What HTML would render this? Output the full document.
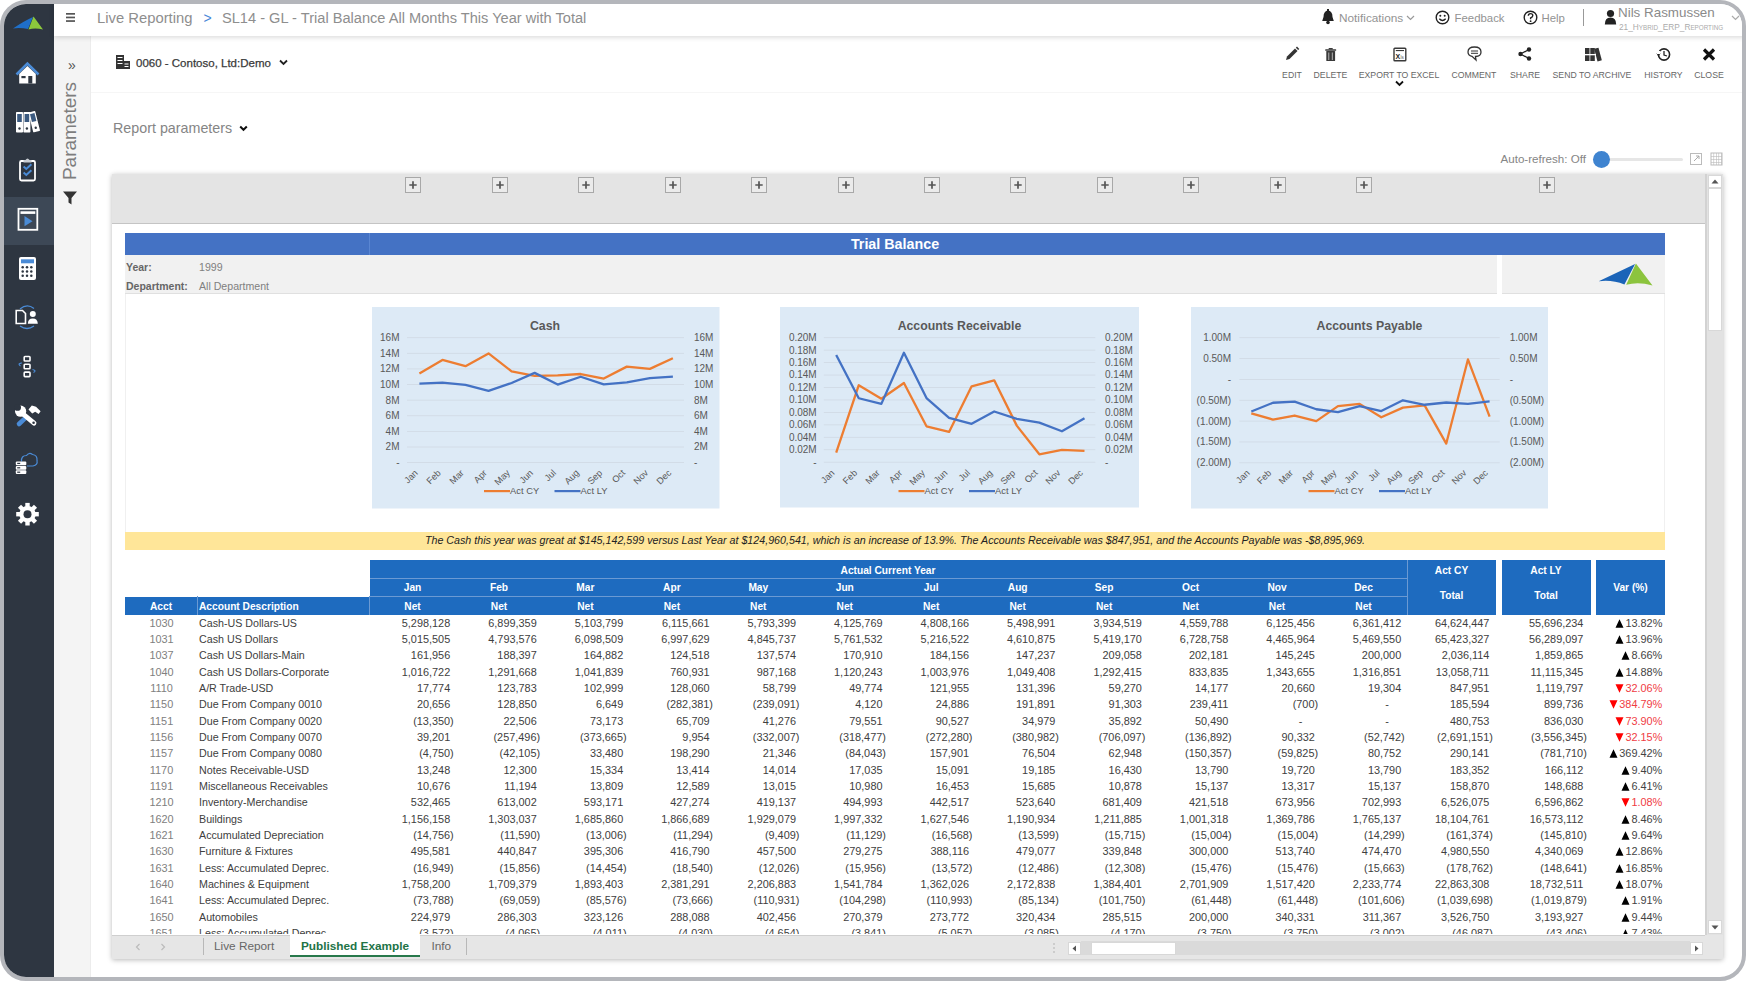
<!DOCTYPE html>
<html><head><meta charset="utf-8"><title>Live Reporting</title>
<style>
html,body{margin:0;padding:0;}
body{width:1746px;height:981px;overflow:hidden;background:#fff;position:relative;font-family:"Liberation Sans", sans-serif;}
#frame{position:absolute;left:0;top:0;width:1746px;height:981px;box-sizing:border-box;border:4px solid #b4b6bb;border-radius:26px;overflow:hidden;background:#fff;}
#inner{position:absolute;left:-4px;top:-4px;width:1746px;height:981px;}
.t{position:absolute;white-space:nowrap;}
</style></head><body>
<div id="frame"><div id="inner">
<div style="position:absolute;left:0;top:0;width:54.5px;height:981px;background:#2e3641;"></div><div style="position:absolute;left:0;top:196.5px;width:54.5px;height:48.5px;background:#3d4856;"></div><svg style="position:absolute;left:0;top:0" width="54" height="540" viewBox="0 0 54 540">
<!-- logo -->
<path d="M13 28.5 Q24 21 33 17 L28 29 Q20 27.5 13 28.5Z" fill="#1f6fc8"/>
<path d="M33.5 16.5 L43 29.5 Q35 27.5 28.5 29.5Z" fill="#8cc83c"/>
<!-- home -->
<path d="M16.5 74.5 L27.4 63.5 L38.5 74.5" fill="none" stroke="#4a8bd6" stroke-width="2.6" stroke-linejoin="miter"/>
<path d="M19.2 74 L27.4 66 L35.8 74 L35.8 83.4 L19.2 83.4Z" fill="#ffffff"/>
<rect x="28.3" y="76" width="4" height="7.5" fill="#2e3641"/>
<rect x="21.4" y="76" width="4.2" height="2.2" fill="#2e3641"/>
<!-- binders -->
<rect x="16" y="112" width="7" height="20.5" rx="0.8" fill="#ffffff"/>
<rect x="23.4" y="112" width="7" height="20.5" rx="0.8" fill="#ffffff"/>
<g transform="rotate(-14 34 122)"><rect x="30.8" y="111.5" width="7" height="20.5" rx="0.8" fill="#ffffff"/>
<rect x="32" y="113.5" width="4.6" height="8" fill="#3b5a80"/><circle cx="34.3" cy="128" r="1.2" fill="#2e3641"/></g>
<rect x="17.2" y="114" width="4.6" height="8" fill="#3b5a80"/><rect x="24.6" y="114" width="4.6" height="8" fill="#3b5a80"/>
<circle cx="19.5" cy="128.5" r="1.2" fill="#2e3641"/><circle cx="26.9" cy="128.5" r="1.2" fill="#2e3641"/>
<!-- clipboard -->
<rect x="20" y="161" width="15" height="19.5" rx="1.5" fill="none" stroke="#ffffff" stroke-width="1.8"/>
<path d="M23.5 162.5 L23.5 160 L25.5 160 Q27.5 157 29.5 160 L31.5 160 L31.5 162.5Z" fill="#c9ced4"/>
<path d="M23.6 166.5 L26.3 169 L31.4 164.2" fill="none" stroke="#4a8bd6" stroke-width="2"/>
<path d="M23.6 172.5 L26.3 175 L31.4 170.2" fill="none" stroke="#4a8bd6" stroke-width="2"/>
<!-- report (active) -->
<rect x="18.5" y="208.8" width="18.8" height="21" fill="none" stroke="#ffffff" stroke-width="1.8"/>
<rect x="20.5" y="211.3" width="14.8" height="2.6" fill="#ffffff"/>
<path d="M24.5 216 L32.5 221.2 L24.5 226.3Z" fill="#4a8bd6"/>
<!-- calculator -->
<rect x="19" y="257" width="17" height="23" rx="2" fill="#ffffff"/>
<rect x="21" y="259.3" width="13" height="4" fill="#4a8bd6"/>
<circle cx="22.7" cy="267.3" r="1.25" fill="#2e3641"/><circle cx="22.7" cy="271.5" r="1.25" fill="#2e3641"/><circle cx="22.7" cy="275.7" r="1.25" fill="#2e3641"/><circle cx="27.0" cy="267.3" r="1.25" fill="#2e3641"/><circle cx="27.0" cy="271.5" r="1.25" fill="#2e3641"/><circle cx="27.0" cy="275.7" r="1.25" fill="#2e3641"/><circle cx="31.3" cy="267.3" r="1.25" fill="#2e3641"/><circle cx="31.3" cy="271.5" r="1.25" fill="#2e3641"/><circle cx="31.3" cy="275.7" r="1.25" fill="#2e3641"/>
<!-- doc/person -->
<path d="M16.2 310.5 L22.5 310.5 L25.5 313.5 L25.5 323.5 L16.2 323.5Z" fill="none" stroke="#ffffff" stroke-width="1.6"/>
<circle cx="32.8" cy="314" r="3" fill="#ffffff"/><path d="M27.8 323.8 Q28 318.5 32.8 318.5 Q37.6 318.5 37.8 323.8Z" fill="#ffffff"/>
<path d="M20 309 Q27 303 34 308.5" fill="none" stroke="#4a8bd6" stroke-width="1.3"/>
<path d="M20 326 Q27 331 34 326" fill="none" stroke="#4a8bd6" stroke-width="1.3"/>
<!-- hierarchy -->
<rect x="24.2" y="356.5" width="5.8" height="4.5" rx="0.8" fill="none" stroke="#ffffff" stroke-width="1.6"/>
<rect x="24.2" y="364.3" width="5.8" height="4.5" rx="0.8" fill="none" stroke="#ffffff" stroke-width="1.6"/>
<rect x="24.2" y="372.1" width="5.8" height="4.5" rx="0.8" fill="none" stroke="#ffffff" stroke-width="1.6"/>
<path d="M21.8 362.8 Q17 363.8 20.5 366" fill="none" stroke="#4a8bd6" stroke-width="1.2"/>
<path d="M32.5 369.5 Q37 370.5 33.5 372.5" fill="none" stroke="#4a8bd6" stroke-width="1.2"/>
<!-- tools -->
<path d="M19 424 L25.5 417.8" stroke="#4a8bd6" stroke-width="4.6" stroke-linecap="round"/>
<path d="M28.5 409.5 L31.8 405.6 L36 406.8 L40.6 411.2 L38.6 414 L35.2 411.8 L32.2 413.5Z" fill="#ffffff"/>
<path d="M22.5 413.5 L34 423.2" stroke="#ffffff" stroke-width="4.8" stroke-linecap="round"/>
<circle cx="20.6" cy="411.2" r="5.6" fill="#ffffff"/>
<circle cx="17.6" cy="407.4" r="3.4" fill="#2e3641"/>
<circle cx="33.6" cy="422.8" r="1.3" fill="#2e3641"/>
<!-- server cloud -->
<path d="M21.5 461.5 Q21 455.5 26.5 455.5 Q29 452 32.5 454.5 Q37.5 455 37 460.5 Q38 465 33 466 L27 466" fill="none" stroke="#4a8bd6" stroke-width="1.2"/>
<rect x="15.8" y="461.5" width="10.5" height="3.8" rx="1" fill="#ffffff"/>
<rect x="15.8" y="465.9" width="10.5" height="3.8" rx="1" fill="#ffffff"/>
<rect x="15.8" y="470.3" width="10.5" height="3.8" rx="1" fill="#ffffff"/>
<rect x="17.2" y="462.8" width="3" height="1.2" fill="#2e3641"/><rect x="17.2" y="467.2" width="3" height="1.2" fill="#2e3641"/><rect x="17.2" y="471.6" width="3" height="1.2" fill="#2e3641"/>
<!-- gear -->
<g transform="translate(27.5 514.2)">
<rect x="-2.2" y="-11.3" width="4.4" height="5" fill="#ffffff" transform="rotate(0)"/><rect x="-2.2" y="-11.3" width="4.4" height="5" fill="#ffffff" transform="rotate(45)"/><rect x="-2.2" y="-11.3" width="4.4" height="5" fill="#ffffff" transform="rotate(90)"/><rect x="-2.2" y="-11.3" width="4.4" height="5" fill="#ffffff" transform="rotate(135)"/><rect x="-2.2" y="-11.3" width="4.4" height="5" fill="#ffffff" transform="rotate(180)"/><rect x="-2.2" y="-11.3" width="4.4" height="5" fill="#ffffff" transform="rotate(225)"/><rect x="-2.2" y="-11.3" width="4.4" height="5" fill="#ffffff" transform="rotate(270)"/><rect x="-2.2" y="-11.3" width="4.4" height="5" fill="#ffffff" transform="rotate(315)"/>
<circle r="8.2" fill="#ffffff"/><circle r="4" fill="#2e3641"/>
</g>
</svg><div style="position:absolute;left:54px;top:0;width:1692px;height:36px;background:#fff;box-shadow:0 1.5px 5px rgba(0,0,0,0.15);z-index:2;"></div><div style="position:absolute;left:54px;top:36px;width:36px;height:945px;background:#f4f4f4;"></div><div style="position:absolute;left:90px;top:36px;width:1px;height:945px;background:#ececec;"></div><div style="position:absolute;left:0;top:0;width:1746px;height:36px;z-index:3;"><svg style="position:absolute;left:66px;top:13px" width="10" height="10"><rect x="0" y="0" width="9" height="1.7" fill="#555"/><rect x="0" y="3.6" width="9" height="1.7" fill="#555"/><rect x="0" y="7.2" width="9" height="1.7" fill="#555"/></svg><div class="t" style="left:97px;top:9px;font-size:14.8px;line-height:18px;color:#8e8e8e;">Live Reporting</div><div class="t" style="left:203.5px;top:9px;font-size:14px;line-height:18px;color:#4a88d8;">&gt;</div><div class="t" style="left:222px;top:9px;font-size:14.62px;line-height:18px;color:#8e8e8e;">SL14 - GL - Trial Balance All Months This Year with Total</div><svg style="position:absolute;left:1321px;top:9px" width="14" height="16" viewBox="0 0 14 16"><path d="M7 1.5 Q11.5 2 11.5 8 L12.8 12 L1.2 12 L2.5 8 Q2.5 2 7 1.5Z" fill="#222"/><rect x="6" y="0" width="2" height="2" fill="#222"/><circle cx="7" cy="13.5" r="1.8" fill="#222"/></svg><div class="t" style="left:1339px;top:10.5px;font-size:11.8px;line-height:15px;color:#939393;">Notifications</div><svg style="position:absolute;left:1406px;top:15px" width="9" height="6"><path d="M1 1 L4.5 4.5 L8 1" fill="none" stroke="#999" stroke-width="1.2"/></svg><svg style="position:absolute;left:1435px;top:10px" width="15" height="15" viewBox="0 0 15 15"><circle cx="7.5" cy="7.5" r="6.3" fill="none" stroke="#222" stroke-width="1.4"/><circle cx="5.3" cy="5.8" r="1" fill="#222"/><circle cx="9.7" cy="5.8" r="1" fill="#222"/><path d="M4.3 8.8 Q7.5 12.2 10.7 8.8" fill="none" stroke="#222" stroke-width="1.3"/></svg><div class="t" style="left:1454.5px;top:10.5px;font-size:11.4px;line-height:15px;color:#939393;">Feedback</div><svg style="position:absolute;left:1523px;top:10px" width="15" height="15" viewBox="0 0 15 15"><circle cx="7.5" cy="7.5" r="6.3" fill="none" stroke="#222" stroke-width="1.4"/><path d="M5.3 5.8 Q5.3 3.6 7.5 3.6 Q9.8 3.6 9.8 5.6 Q9.8 7 7.6 8 L7.6 9.3" fill="none" stroke="#222" stroke-width="1.4"/><circle cx="7.6" cy="11.2" r="0.9" fill="#222"/></svg><div class="t" style="left:1541.5px;top:10.5px;font-size:11.4px;line-height:15px;color:#939393;">Help</div><div style="position:absolute;left:1583px;top:9px;width:1px;height:17px;background:#999;"></div><svg style="position:absolute;left:1604px;top:9px" width="13" height="16" viewBox="0 0 13 16"><circle cx="6.5" cy="4.5" r="3.6" fill="#222"/><path d="M0.8 15.5 Q0.8 8.5 6.5 8.5 Q12.2 8.5 12.2 15.5Z" fill="#222"/></svg><div class="t" style="left:1618px;top:5px;font-size:13.4px;line-height:16px;color:#8a8a8a;">Nils Rasmussen</div><div class="t" style="left:1619px;top:21.5px;font-size:8.3px;line-height:11px;color:#ababab;">21_H<span style="font-size:6.3px">YBRID</span>_ERP_R<span style="font-size:6.3px">EPORTING</span></div><svg style="position:absolute;left:1731px;top:15px" width="9" height="6"><path d="M1 1 L4.5 4.5 L8 1" fill="none" stroke="#aaa" stroke-width="1.2"/></svg></div><div class="t" style="left:68px;top:57px;font-size:14px;line-height:16px;color:#555;">&raquo;</div><div class="t" style="left:20px;top:122.5px;width:100px;height:16px;text-align:center;font-size:19px;line-height:16px;color:#7d7d7d;transform:rotate(-90deg);">Parameters</div><svg style="position:absolute;left:63px;top:191px" width="14" height="14" viewBox="0 0 14 14"><path d="M0 0.5 L14 0.5 L8.5 7 L8.5 13.5 L5.5 11.5 L5.5 7Z" fill="#333"/></svg><svg style="position:absolute;left:116px;top:55px" width="14" height="14" viewBox="0 0 14 14"><rect x="0" y="0" width="8" height="14" fill="#333"/><rect x="7" y="6" width="7" height="8" fill="#333"/><rect x="1.5" y="2" width="5" height="1" fill="#fff"/><rect x="1.5" y="5" width="5" height="1" fill="#fff"/><rect x="1.5" y="8" width="5" height="1" fill="#fff"/><rect x="8.5" y="8.5" width="4" height="1" fill="#fff"/><rect x="8.5" y="11" width="4" height="1" fill="#fff"/></svg><div class="t" style="left:136px;top:55.5px;font-size:11.5px;line-height:14px;color:#3a3a3a;-webkit-text-stroke:0.25px #3a3a3a;">0060 - Contoso, Ltd:Demo</div><svg style="position:absolute;left:279px;top:59px" width="9" height="7"><path d="M1 1.5 L4.5 5 L8 1.5" fill="none" stroke="#222" stroke-width="1.8"/></svg><div style="position:absolute;left:91px;top:92px;width:1651px;height:1px;background:#f6f6f6;"></div><div class="t" style="left:1232px;width:120px;text-align:center;top:69px;font-size:8.7px;line-height:12px;color:#666;">EDIT</div><div class="t" style="left:1270.5px;width:120px;text-align:center;top:69px;font-size:8.7px;line-height:12px;color:#666;">DELETE</div><div class="t" style="left:1339px;width:120px;text-align:center;top:69px;font-size:8.7px;line-height:12px;color:#666;">EXPORT TO EXCEL</div><div class="t" style="left:1414px;width:120px;text-align:center;top:69px;font-size:8.7px;line-height:12px;color:#666;">COMMENT</div><div class="t" style="left:1465px;width:120px;text-align:center;top:69px;font-size:8.7px;line-height:12px;color:#666;">SHARE</div><div class="t" style="left:1532px;width:120px;text-align:center;top:69px;font-size:8.7px;line-height:12px;color:#666;">SEND TO ARCHIVE</div><div class="t" style="left:1603.5px;width:120px;text-align:center;top:69px;font-size:8.7px;line-height:12px;color:#666;">HISTORY</div><div class="t" style="left:1649px;width:120px;text-align:center;top:69px;font-size:8.7px;line-height:12px;color:#666;">CLOSE</div><svg style="position:absolute;left:1395px;top:80px" width="9" height="7"><path d="M1 1.5 L4.5 5 L8 1.5" fill="none" stroke="#111" stroke-width="1.8"/></svg><svg style="position:absolute;left:1270px;top:40.5px" width="470" height="26" viewBox="1270 40 470 26">
<path d="M1286 59 L1287 55.5 L1295 47.5 L1297.5 50 L1289.5 58Z" fill="#333"/><path d="M1295.8 46.8 L1297 45.6 L1299.3 47.9 L1298.1 49.1Z" fill="#333"/>
<rect x="1326.3" y="50" width="8.8" height="10" rx="0.6" fill="#3a3a3a"/><rect x="1325.2" y="48.2" width="11" height="1.6" rx="0.5" fill="#3a3a3a"/><rect x="1328.7" y="47" width="4" height="1.4" fill="#3a3a3a"/>
<rect x="1328.2" y="51.5" width="1.1" height="7.5" fill="#aaa"/><rect x="1331.8" y="51.5" width="1.1" height="7.5" fill="#aaa"/>
<rect x="1394" y="47.2" width="11.8" height="12.6" rx="0.8" fill="none" stroke="#3a3a3a" stroke-width="1.4"/><rect x="1395.8" y="49" width="8.2" height="1.1" fill="#3a3a3a"/>
<text x="1395.6" y="57.6" font-size="7" font-family="Liberation Sans" font-weight="bold" fill="#222">X</text><text x="1400.6" y="57.8" font-size="4.5" font-family="Liberation Sans" fill="#555">ls</text>
<path d="M1474.5 46 Q1481 46 1481 51 Q1481 55.5 1475.5 55.5 L1476 59 L1472 55.3 Q1468 54.5 1468 51 Q1468 46 1474.5 46Z" fill="none" stroke="#333" stroke-width="1.3"/>
<rect x="1471" y="49.5" width="7" height="1" fill="#333"/><rect x="1471" y="51.8" width="7" height="1" fill="#333"/>
<circle cx="1520.5" cy="53" r="2.2" fill="#222"/><circle cx="1529" cy="48.5" r="2.2" fill="#222"/><circle cx="1529" cy="57.5" r="2.2" fill="#222"/>
<path d="M1520.5 53 L1529 48.5 M1520.5 53 L1529 57.5" stroke="#222" stroke-width="1.3"/>
<rect x="1585" y="47" width="4.5" height="13" fill="#333"/><rect x="1590.3" y="47" width="4.5" height="13" fill="#333"/><g transform="rotate(-15 1598 53)"><rect x="1595.6" y="47" width="4.5" height="13" fill="#333"/></g>
<rect x="1584" y="53" width="12" height="1.3" fill="#fff"/>
<circle cx="1664" cy="53.5" r="5.6" fill="none" stroke="#222" stroke-width="1.6"/><path d="M1664 50 L1664 54 L1667 55" fill="none" stroke="#222" stroke-width="1.3"/>
<path d="M1656.5 52 L1660.5 52 L1658.5 56Z" fill="#222"/><rect x="1657" y="50" width="3" height="3" fill="#fff"/>
<path d="M1704 48.5 L1714 58.5 M1714 48.5 L1704 58.5" stroke="#111" stroke-width="3.2"/>
</svg><div class="t" style="left:113px;top:120px;font-size:14.3px;line-height:17px;color:#858585;">Report parameters</div><svg style="position:absolute;left:239px;top:125px" width="9" height="7"><path d="M1.2 1.5 L4.5 4.8 L7.8 1.5" fill="none" stroke="#111" stroke-width="2"/></svg><div class="t" style="left:1500.5px;top:151.5px;font-size:11.6px;line-height:14px;color:#858585;">Auto-refresh: Off</div><div style="position:absolute;left:1604px;top:157.5px;width:79px;height:3px;background:#e6e6e6;border-radius:1.5px;"></div><div style="position:absolute;left:1592.5px;top:150.5px;width:17px;height:17px;border-radius:50%;background:#3f84d0;"></div><svg style="position:absolute;left:1690px;top:152px" width="40" height="14" viewBox="0 0 40 14"><rect x="0.5" y="1.5" width="11" height="11" fill="none" stroke="#bbb" stroke-width="1"/><path d="M4 9 L9 4 M6 4 L9 4 L9 7" stroke="#aaa" stroke-width="1" fill="none"/><rect x="21" y="1" width="11" height="12" fill="none" stroke="#bbb" stroke-width="1"/><rect x="23.5" y="1" width="0.6" height="12" fill="#bbb"/><rect x="26.0" y="1" width="0.6" height="12" fill="#bbb"/><rect x="28.5" y="1" width="0.6" height="12" fill="#bbb"/><rect x="31.0" y="1" width="0.6" height="12" fill="#bbb"/><rect x="21" y="4.0" width="11" height="0.6" fill="#bbb"/><rect x="21" y="7.0" width="11" height="0.6" fill="#bbb"/><rect x="21" y="10.0" width="11" height="0.6" fill="#bbb"/></svg><div style="position:absolute;left:112px;top:174px;width:1611px;height:785px;background:#fff;box-shadow:0 1px 5px rgba(0,0,0,0.28);"></div><div style="position:absolute;left:112px;top:174px;width:1593px;height:49px;background:#e4e4e4;border-bottom:1.5px solid #c4c4c4;"></div><div style="position:absolute;left:405.2px;top:177px;width:14px;height:14px;border:1px solid #a8a8a8;background:#ebebeb;"></div><svg style="position:absolute;left:405.2px;top:177px" width="16" height="16"><path d="M8 4.3 L8 11.7 M4.3 8 L11.7 8" stroke="#555" stroke-width="1.7"/></svg><div style="position:absolute;left:491.6px;top:177px;width:14px;height:14px;border:1px solid #a8a8a8;background:#ebebeb;"></div><svg style="position:absolute;left:491.6px;top:177px" width="16" height="16"><path d="M8 4.3 L8 11.7 M4.3 8 L11.7 8" stroke="#555" stroke-width="1.7"/></svg><div style="position:absolute;left:578.1px;top:177px;width:14px;height:14px;border:1px solid #a8a8a8;background:#ebebeb;"></div><svg style="position:absolute;left:578.1px;top:177px" width="16" height="16"><path d="M8 4.3 L8 11.7 M4.3 8 L11.7 8" stroke="#555" stroke-width="1.7"/></svg><div style="position:absolute;left:664.5px;top:177px;width:14px;height:14px;border:1px solid #a8a8a8;background:#ebebeb;"></div><svg style="position:absolute;left:664.5px;top:177px" width="16" height="16"><path d="M8 4.3 L8 11.7 M4.3 8 L11.7 8" stroke="#555" stroke-width="1.7"/></svg><div style="position:absolute;left:751.0px;top:177px;width:14px;height:14px;border:1px solid #a8a8a8;background:#ebebeb;"></div><svg style="position:absolute;left:751.0px;top:177px" width="16" height="16"><path d="M8 4.3 L8 11.7 M4.3 8 L11.7 8" stroke="#555" stroke-width="1.7"/></svg><div style="position:absolute;left:837.5px;top:177px;width:14px;height:14px;border:1px solid #a8a8a8;background:#ebebeb;"></div><svg style="position:absolute;left:837.5px;top:177px" width="16" height="16"><path d="M8 4.3 L8 11.7 M4.3 8 L11.7 8" stroke="#555" stroke-width="1.7"/></svg><div style="position:absolute;left:923.9px;top:177px;width:14px;height:14px;border:1px solid #a8a8a8;background:#ebebeb;"></div><svg style="position:absolute;left:923.9px;top:177px" width="16" height="16"><path d="M8 4.3 L8 11.7 M4.3 8 L11.7 8" stroke="#555" stroke-width="1.7"/></svg><div style="position:absolute;left:1010.3px;top:177px;width:14px;height:14px;border:1px solid #a8a8a8;background:#ebebeb;"></div><svg style="position:absolute;left:1010.3px;top:177px" width="16" height="16"><path d="M8 4.3 L8 11.7 M4.3 8 L11.7 8" stroke="#555" stroke-width="1.7"/></svg><div style="position:absolute;left:1096.8px;top:177px;width:14px;height:14px;border:1px solid #a8a8a8;background:#ebebeb;"></div><svg style="position:absolute;left:1096.8px;top:177px" width="16" height="16"><path d="M8 4.3 L8 11.7 M4.3 8 L11.7 8" stroke="#555" stroke-width="1.7"/></svg><div style="position:absolute;left:1183.2px;top:177px;width:14px;height:14px;border:1px solid #a8a8a8;background:#ebebeb;"></div><svg style="position:absolute;left:1183.2px;top:177px" width="16" height="16"><path d="M8 4.3 L8 11.7 M4.3 8 L11.7 8" stroke="#555" stroke-width="1.7"/></svg><div style="position:absolute;left:1269.7px;top:177px;width:14px;height:14px;border:1px solid #a8a8a8;background:#ebebeb;"></div><svg style="position:absolute;left:1269.7px;top:177px" width="16" height="16"><path d="M8 4.3 L8 11.7 M4.3 8 L11.7 8" stroke="#555" stroke-width="1.7"/></svg><div style="position:absolute;left:1356.2px;top:177px;width:14px;height:14px;border:1px solid #a8a8a8;background:#ebebeb;"></div><svg style="position:absolute;left:1356.2px;top:177px" width="16" height="16"><path d="M8 4.3 L8 11.7 M4.3 8 L11.7 8" stroke="#555" stroke-width="1.7"/></svg><div style="position:absolute;left:1538.5px;top:177px;width:14px;height:14px;border:1px solid #a8a8a8;background:#ebebeb;"></div><svg style="position:absolute;left:1538.5px;top:177px" width="16" height="16"><path d="M8 4.3 L8 11.7 M4.3 8 L11.7 8" stroke="#555" stroke-width="1.7"/></svg><div style="position:absolute;left:1705px;top:174px;width:18px;height:761px;background:#e2e2e2;border-left:2px solid #d2d2d2;box-sizing:border-box;"></div><div style="position:absolute;left:1708px;top:175px;width:14px;height:13px;background:#fff;border:1px solid #d8d8d8;box-sizing:border-box;"></div><svg style="position:absolute;left:1708px;top:175px" width="14" height="13"><path d="M3.5 8.5 L7 4.5 L10.5 8.5Z" fill="#555"/></svg><div style="position:absolute;left:1708px;top:188px;width:14px;height:143px;background:#fff;border:1px solid #d8d8d8;box-sizing:border-box;"></div><div style="position:absolute;left:1708px;top:920px;width:14px;height:14px;background:#fff;border:1px solid #d8d8d8;box-sizing:border-box;"></div><svg style="position:absolute;left:1708px;top:920px" width="14" height="14"><path d="M3.5 5.5 L7 9.5 L10.5 5.5Z" fill="#555"/></svg><div style="position:absolute;left:125px;top:232.5px;width:1540px;height:23px;background:#4472c4;"></div><div style="position:absolute;left:369px;top:232.5px;width:1px;height:23px;background:#5a86d2;"></div><div class="t" style="left:595px;width:600px;text-align:center;top:236px;font-size:14.3px;line-height:17px;color:#fff;font-weight:bold;">Trial Balance</div><div style="position:absolute;left:125px;top:255px;width:1540px;height:39px;background:#f1f1f1;border-bottom:1px solid #e0e0e0;box-sizing:border-box;"></div><div style="position:absolute;left:1497px;top:255px;width:4.5px;height:39px;background:#fff;"></div><div class="t" style="left:126px;top:260px;font-size:10.5px;line-height:14px;color:#666;font-weight:bold;">Year:</div><div class="t" style="left:199px;top:260px;font-size:10.6px;line-height:14px;color:#808080;">1999</div><div class="t" style="left:126px;top:279px;font-size:10.5px;line-height:14px;color:#666;font-weight:bold;">Department:</div><div class="t" style="left:199px;top:279px;font-size:10.6px;line-height:14px;color:#808080;">All Department</div><svg style="position:absolute;left:1596px;top:262px" width="58" height="26" viewBox="0 0 58 26"><path d="M2.7 19.3 L39.1 2.1 L28.4 22.4 Q16 17.6 2.7 19.3Z" fill="#1b64b8"/><path d="M39.9 1.6 L56.5 23.4 Q42 19.2 30.2 22.8Z" fill="#8cc43e"/></svg><div style="position:absolute;left:125px;top:294px;width:1px;height:238px;background:#f0f0f0;"></div><div style="position:absolute;left:1664px;top:294px;width:1px;height:238px;background:#f0f0f0;"></div><svg style="position:absolute;left:0;top:0" width="1746" height="981" viewBox="0 0 1746 981" font-family="Liberation Sans, sans-serif"><rect x="372" y="307" width="347.5" height="201.5" fill="#ddeaf6"/><text x="545" y="329.8" text-anchor="middle" font-size="12.3" font-weight="bold" fill="#595959">Cash</text><rect x="407" y="337.30" width="277" height="0.8" fill="#d0d9e4"/><text x="399.5" y="341.10" text-anchor="end" font-size="10" fill="#595959">16M</text><text x="694" y="341.10" text-anchor="start" font-size="10" fill="#595959">16M</text><rect x="407" y="352.91" width="277" height="0.8" fill="#d0d9e4"/><text x="399.5" y="356.71" text-anchor="end" font-size="10" fill="#595959">14M</text><text x="694" y="356.71" text-anchor="start" font-size="10" fill="#595959">14M</text><rect x="407" y="368.53" width="277" height="0.8" fill="#d0d9e4"/><text x="399.5" y="372.32" text-anchor="end" font-size="10" fill="#595959">12M</text><text x="694" y="372.32" text-anchor="start" font-size="10" fill="#595959">12M</text><rect x="407" y="384.14" width="277" height="0.8" fill="#d0d9e4"/><text x="399.5" y="387.94" text-anchor="end" font-size="10" fill="#595959">10M</text><text x="694" y="387.94" text-anchor="start" font-size="10" fill="#595959">10M</text><rect x="407" y="399.75" width="277" height="0.8" fill="#d0d9e4"/><text x="399.5" y="403.55" text-anchor="end" font-size="10" fill="#595959">8M</text><text x="694" y="403.55" text-anchor="start" font-size="10" fill="#595959">8M</text><rect x="407" y="415.36" width="277" height="0.8" fill="#d0d9e4"/><text x="399.5" y="419.16" text-anchor="end" font-size="10" fill="#595959">6M</text><text x="694" y="419.16" text-anchor="start" font-size="10" fill="#595959">6M</text><rect x="407" y="430.98" width="277" height="0.8" fill="#d0d9e4"/><text x="399.5" y="434.77" text-anchor="end" font-size="10" fill="#595959">4M</text><text x="694" y="434.77" text-anchor="start" font-size="10" fill="#595959">4M</text><rect x="407" y="446.59" width="277" height="0.8" fill="#d0d9e4"/><text x="399.5" y="450.39" text-anchor="end" font-size="10" fill="#595959">2M</text><text x="694" y="450.39" text-anchor="start" font-size="10" fill="#595959">2M</text><rect x="407" y="462.20" width="277" height="0.8" fill="#d0d9e4"/><text x="399.5" y="466.00" text-anchor="end" font-size="10" fill="#595959">-</text><text x="694" y="466.00" text-anchor="start" font-size="10" fill="#595959">-</text><polyline points="419.40,373.58 442.45,359.89 465.49,366.17 488.54,353.39 511.58,371.33 534.63,375.82 557.67,375.37 580.72,374.02 603.76,378.51 626.81,366.62 649.85,368.86 672.90,358.32" fill="none" stroke="#ed7d31" stroke-width="2.3" stroke-linejoin="round"/><polyline points="419.40,383.67 442.45,382.55 465.49,384.79 488.54,390.85 511.58,383.00 534.63,372.90 557.67,384.57 580.72,376.72 603.76,384.34 626.81,382.32 649.85,378.06 672.90,376.72" fill="none" stroke="#4472c4" stroke-width="2.3" stroke-linejoin="round"/><text x="418.40" y="473.5" text-anchor="end" font-size="9.2" fill="#595959" transform="rotate(-45 418.40 473.5)">Jan</text><text x="441.45" y="473.5" text-anchor="end" font-size="9.2" fill="#595959" transform="rotate(-45 441.45 473.5)">Feb</text><text x="464.49" y="473.5" text-anchor="end" font-size="9.2" fill="#595959" transform="rotate(-45 464.49 473.5)">Mar</text><text x="487.54" y="473.5" text-anchor="end" font-size="9.2" fill="#595959" transform="rotate(-45 487.54 473.5)">Apr</text><text x="510.58" y="473.5" text-anchor="end" font-size="9.2" fill="#595959" transform="rotate(-45 510.58 473.5)">May</text><text x="533.63" y="473.5" text-anchor="end" font-size="9.2" fill="#595959" transform="rotate(-45 533.63 473.5)">Jun</text><text x="556.67" y="473.5" text-anchor="end" font-size="9.2" fill="#595959" transform="rotate(-45 556.67 473.5)">Jul</text><text x="579.72" y="473.5" text-anchor="end" font-size="9.2" fill="#595959" transform="rotate(-45 579.72 473.5)">Aug</text><text x="602.76" y="473.5" text-anchor="end" font-size="9.2" fill="#595959" transform="rotate(-45 602.76 473.5)">Sep</text><text x="625.81" y="473.5" text-anchor="end" font-size="9.2" fill="#595959" transform="rotate(-45 625.81 473.5)">Oct</text><text x="648.85" y="473.5" text-anchor="end" font-size="9.2" fill="#595959" transform="rotate(-45 648.85 473.5)">Nov</text><text x="671.90" y="473.5" text-anchor="end" font-size="9.2" fill="#595959" transform="rotate(-45 671.90 473.5)">Dec</text><rect x="484" y="490" width="26" height="2.2" fill="#ed7d31"/><text x="510" y="494.3" font-size="9.4" fill="#595959">Act CY</text><rect x="554.5" y="490" width="26" height="2.2" fill="#4472c4"/><text x="580.5" y="494.3" font-size="9.4" fill="#595959">Act LY</text><rect x="780" y="307" width="359" height="200.5" fill="#ddeaf6"/><text x="959.5" y="329.8" text-anchor="middle" font-size="12.3" font-weight="bold" fill="#595959">Accounts Receivable</text><rect x="823.8" y="337.30" width="271.5" height="0.8" fill="#d0d9e4"/><text x="816.7" y="341.10" text-anchor="end" font-size="10" fill="#595959">0.20M</text><text x="1105" y="341.10" text-anchor="start" font-size="10" fill="#595959">0.20M</text><rect x="823.8" y="349.75" width="271.5" height="0.8" fill="#d0d9e4"/><text x="816.7" y="353.55" text-anchor="end" font-size="10" fill="#595959">0.18M</text><text x="1105" y="353.55" text-anchor="start" font-size="10" fill="#595959">0.18M</text><rect x="823.8" y="362.20" width="271.5" height="0.8" fill="#d0d9e4"/><text x="816.7" y="366.00" text-anchor="end" font-size="10" fill="#595959">0.16M</text><text x="1105" y="366.00" text-anchor="start" font-size="10" fill="#595959">0.16M</text><rect x="823.8" y="374.65" width="271.5" height="0.8" fill="#d0d9e4"/><text x="816.7" y="378.45" text-anchor="end" font-size="10" fill="#595959">0.14M</text><text x="1105" y="378.45" text-anchor="start" font-size="10" fill="#595959">0.14M</text><rect x="823.8" y="387.10" width="271.5" height="0.8" fill="#d0d9e4"/><text x="816.7" y="390.90" text-anchor="end" font-size="10" fill="#595959">0.12M</text><text x="1105" y="390.90" text-anchor="start" font-size="10" fill="#595959">0.12M</text><rect x="823.8" y="399.55" width="271.5" height="0.8" fill="#d0d9e4"/><text x="816.7" y="403.35" text-anchor="end" font-size="10" fill="#595959">0.10M</text><text x="1105" y="403.35" text-anchor="start" font-size="10" fill="#595959">0.10M</text><rect x="823.8" y="412.00" width="271.5" height="0.8" fill="#d0d9e4"/><text x="816.7" y="415.80" text-anchor="end" font-size="10" fill="#595959">0.08M</text><text x="1105" y="415.80" text-anchor="start" font-size="10" fill="#595959">0.08M</text><rect x="823.8" y="424.45" width="271.5" height="0.8" fill="#d0d9e4"/><text x="816.7" y="428.25" text-anchor="end" font-size="10" fill="#595959">0.06M</text><text x="1105" y="428.25" text-anchor="start" font-size="10" fill="#595959">0.06M</text><rect x="823.8" y="436.90" width="271.5" height="0.8" fill="#d0d9e4"/><text x="816.7" y="440.70" text-anchor="end" font-size="10" fill="#595959">0.04M</text><text x="1105" y="440.70" text-anchor="start" font-size="10" fill="#595959">0.04M</text><rect x="823.8" y="449.35" width="271.5" height="0.8" fill="#d0d9e4"/><text x="816.7" y="453.15" text-anchor="end" font-size="10" fill="#595959">0.02M</text><text x="1105" y="453.15" text-anchor="start" font-size="10" fill="#595959">0.02M</text><rect x="823.8" y="461.80" width="271.5" height="0.8" fill="#d0d9e4"/><text x="816.7" y="465.60" text-anchor="end" font-size="10" fill="#595959">-</text><text x="1105" y="465.60" text-anchor="start" font-size="10" fill="#595959">-</text><polyline points="836.20,452.53 858.77,385.24 881.35,398.70 903.92,383.00 926.49,426.29 949.06,431.90 971.64,386.36 994.21,380.31 1016.78,425.62 1039.35,454.33 1061.93,449.84 1084.50,450.96" fill="none" stroke="#ed7d31" stroke-width="2.3" stroke-linejoin="round"/><polyline points="836.20,354.96 858.77,398.25 881.35,403.86 903.92,352.71 926.49,398.03 949.06,417.77 971.64,423.82 994.21,411.48 1016.78,418.89 1039.35,422.70 1061.93,431.22 1084.50,418.21" fill="none" stroke="#4472c4" stroke-width="2.3" stroke-linejoin="round"/><text x="835.20" y="473.5" text-anchor="end" font-size="9.2" fill="#595959" transform="rotate(-45 835.20 473.5)">Jan</text><text x="857.77" y="473.5" text-anchor="end" font-size="9.2" fill="#595959" transform="rotate(-45 857.77 473.5)">Feb</text><text x="880.35" y="473.5" text-anchor="end" font-size="9.2" fill="#595959" transform="rotate(-45 880.35 473.5)">Mar</text><text x="902.92" y="473.5" text-anchor="end" font-size="9.2" fill="#595959" transform="rotate(-45 902.92 473.5)">Apr</text><text x="925.49" y="473.5" text-anchor="end" font-size="9.2" fill="#595959" transform="rotate(-45 925.49 473.5)">May</text><text x="948.06" y="473.5" text-anchor="end" font-size="9.2" fill="#595959" transform="rotate(-45 948.06 473.5)">Jun</text><text x="970.64" y="473.5" text-anchor="end" font-size="9.2" fill="#595959" transform="rotate(-45 970.64 473.5)">Jul</text><text x="993.21" y="473.5" text-anchor="end" font-size="9.2" fill="#595959" transform="rotate(-45 993.21 473.5)">Aug</text><text x="1015.78" y="473.5" text-anchor="end" font-size="9.2" fill="#595959" transform="rotate(-45 1015.78 473.5)">Sep</text><text x="1038.35" y="473.5" text-anchor="end" font-size="9.2" fill="#595959" transform="rotate(-45 1038.35 473.5)">Oct</text><text x="1060.93" y="473.5" text-anchor="end" font-size="9.2" fill="#595959" transform="rotate(-45 1060.93 473.5)">Nov</text><text x="1083.50" y="473.5" text-anchor="end" font-size="9.2" fill="#595959" transform="rotate(-45 1083.50 473.5)">Dec</text><rect x="898.5" y="490" width="26" height="2.2" fill="#ed7d31"/><text x="924.5" y="494.3" font-size="9.4" fill="#595959">Act CY</text><rect x="969.0" y="490" width="26" height="2.2" fill="#4472c4"/><text x="995.0" y="494.3" font-size="9.4" fill="#595959">Act LY</text><rect x="1191" y="307" width="357" height="201.5" fill="#ddeaf6"/><text x="1369.5" y="329.8" text-anchor="middle" font-size="12.3" font-weight="bold" fill="#595959">Accounts Payable</text><rect x="1239.4" y="337.30" width="260.29999999999995" height="0.8" fill="#d0d9e4"/><text x="1231" y="341.10" text-anchor="end" font-size="10" fill="#595959">1.00M</text><text x="1509.7" y="341.10" text-anchor="start" font-size="10" fill="#595959">1.00M</text><rect x="1239.4" y="358.15" width="260.29999999999995" height="0.8" fill="#d0d9e4"/><text x="1231" y="361.95" text-anchor="end" font-size="10" fill="#595959">0.50M</text><text x="1509.7" y="361.95" text-anchor="start" font-size="10" fill="#595959">0.50M</text><rect x="1239.4" y="379.00" width="260.29999999999995" height="0.8" fill="#d0d9e4"/><text x="1231" y="382.80" text-anchor="end" font-size="10" fill="#595959">-</text><text x="1509.7" y="382.80" text-anchor="start" font-size="10" fill="#595959">-</text><rect x="1239.4" y="399.85" width="260.29999999999995" height="0.8" fill="#d0d9e4"/><text x="1231" y="403.65" text-anchor="end" font-size="10" fill="#595959">(0.50M)</text><text x="1509.7" y="403.65" text-anchor="start" font-size="10" fill="#595959">(0.50M)</text><rect x="1239.4" y="420.70" width="260.29999999999995" height="0.8" fill="#d0d9e4"/><text x="1231" y="424.50" text-anchor="end" font-size="10" fill="#595959">(1.00M)</text><text x="1509.7" y="424.50" text-anchor="start" font-size="10" fill="#595959">(1.00M)</text><rect x="1239.4" y="441.55" width="260.29999999999995" height="0.8" fill="#d0d9e4"/><text x="1231" y="445.35" text-anchor="end" font-size="10" fill="#595959">(1.50M)</text><text x="1509.7" y="445.35" text-anchor="start" font-size="10" fill="#595959">(1.50M)</text><rect x="1239.4" y="462.40" width="260.29999999999995" height="0.8" fill="#d0d9e4"/><text x="1231" y="466.20" text-anchor="end" font-size="10" fill="#595959">(2.00M)</text><text x="1509.7" y="466.20" text-anchor="start" font-size="10" fill="#595959">(2.00M)</text><polyline points="1251.30,413.28 1272.96,419.56 1294.63,415.52 1316.29,421.13 1337.95,406.10 1359.62,403.86 1381.28,417.32 1402.95,407.67 1424.61,405.43 1446.27,443.56 1467.94,359.44 1489.60,416.64" fill="none" stroke="#ed7d31" stroke-width="2.3" stroke-linejoin="round"/><polyline points="1251.30,411.48 1272.96,402.74 1294.63,401.62 1316.29,409.24 1337.95,412.16 1359.62,406.10 1381.28,411.04 1402.95,400.27 1424.61,404.76 1446.27,402.51 1467.94,403.86 1489.60,401.39" fill="none" stroke="#4472c4" stroke-width="2.3" stroke-linejoin="round"/><text x="1250.30" y="473.5" text-anchor="end" font-size="9.2" fill="#595959" transform="rotate(-45 1250.30 473.5)">Jan</text><text x="1271.96" y="473.5" text-anchor="end" font-size="9.2" fill="#595959" transform="rotate(-45 1271.96 473.5)">Feb</text><text x="1293.63" y="473.5" text-anchor="end" font-size="9.2" fill="#595959" transform="rotate(-45 1293.63 473.5)">Mar</text><text x="1315.29" y="473.5" text-anchor="end" font-size="9.2" fill="#595959" transform="rotate(-45 1315.29 473.5)">Apr</text><text x="1336.95" y="473.5" text-anchor="end" font-size="9.2" fill="#595959" transform="rotate(-45 1336.95 473.5)">May</text><text x="1358.62" y="473.5" text-anchor="end" font-size="9.2" fill="#595959" transform="rotate(-45 1358.62 473.5)">Jun</text><text x="1380.28" y="473.5" text-anchor="end" font-size="9.2" fill="#595959" transform="rotate(-45 1380.28 473.5)">Jul</text><text x="1401.95" y="473.5" text-anchor="end" font-size="9.2" fill="#595959" transform="rotate(-45 1401.95 473.5)">Aug</text><text x="1423.61" y="473.5" text-anchor="end" font-size="9.2" fill="#595959" transform="rotate(-45 1423.61 473.5)">Sep</text><text x="1445.27" y="473.5" text-anchor="end" font-size="9.2" fill="#595959" transform="rotate(-45 1445.27 473.5)">Oct</text><text x="1466.94" y="473.5" text-anchor="end" font-size="9.2" fill="#595959" transform="rotate(-45 1466.94 473.5)">Nov</text><text x="1488.60" y="473.5" text-anchor="end" font-size="9.2" fill="#595959" transform="rotate(-45 1488.60 473.5)">Dec</text><rect x="1308.5" y="490" width="26" height="2.2" fill="#ed7d31"/><text x="1334.5" y="494.3" font-size="9.4" fill="#595959">Act CY</text><rect x="1379.0" y="490" width="26" height="2.2" fill="#4472c4"/><text x="1405.0" y="494.3" font-size="9.4" fill="#595959">Act LY</text></svg><div style="position:absolute;left:125px;top:532px;width:1540px;height:18px;background:#ffe699;"></div><div class="t" style="left:195px;width:1400px;text-align:center;top:534px;font-size:10.7px;line-height:13px;color:#222;font-style:italic;">The Cash this year was great at $145,142,599 versus Last Year at $124,960,541, which is an increase of 13.9%. The Accounts Receivable was $847,951, and the Accounts Payable was -$8,895,969.</div><div style="position:absolute;left:369.5px;top:560px;width:1038px;height:54.5px;background:#1e6bbf;"></div><div style="position:absolute;left:125px;top:596.5px;width:245px;height:18px;background:#1e6bbf;"></div><div style="position:absolute;left:1407.5px;top:560px;width:88.5px;height:54.5px;background:#1e6bbf;"></div><div style="position:absolute;left:1502px;top:560px;width:88.5px;height:54.5px;background:#1e6bbf;"></div><div style="position:absolute;left:1596px;top:560px;width:69px;height:54.5px;background:#1e6bbf;"></div><div style="position:absolute;left:369.5px;top:577.5px;width:1038px;height:1px;background:#6b9ad3;"></div><div style="position:absolute;left:369.5px;top:595.5px;width:1038px;height:1px;background:#6b9ad3;"></div><div style="position:absolute;left:368.8px;top:596px;width:1px;height:18.5px;background:#6b9ad3;"></div><div style="position:absolute;left:197px;top:596px;width:1px;height:18.5px;background:#6b9ad3;"></div><div style="position:absolute;left:1407px;top:560px;width:1px;height:54.5px;background:#6b9ad3;"></div><div class="t" style="left:588px;width:600px;text-align:center;top:563.5px;font-size:10.2px;line-height:13px;color:#fff;font-weight:bold;">Actual Current Year</div><div class="t" style="left:372.5px;width:80px;text-align:center;top:581px;font-size:10.2px;line-height:13px;color:#fff;font-weight:bold;">Jan</div><div class="t" style="left:372.5px;width:80px;text-align:center;top:600px;font-size:10.2px;line-height:13px;color:#fff;font-weight:bold;">Net</div><div class="t" style="left:459.0px;width:80px;text-align:center;top:581px;font-size:10.2px;line-height:13px;color:#fff;font-weight:bold;">Feb</div><div class="t" style="left:459.0px;width:80px;text-align:center;top:600px;font-size:10.2px;line-height:13px;color:#fff;font-weight:bold;">Net</div><div class="t" style="left:545.4px;width:80px;text-align:center;top:581px;font-size:10.2px;line-height:13px;color:#fff;font-weight:bold;">Mar</div><div class="t" style="left:545.4px;width:80px;text-align:center;top:600px;font-size:10.2px;line-height:13px;color:#fff;font-weight:bold;">Net</div><div class="t" style="left:631.9px;width:80px;text-align:center;top:581px;font-size:10.2px;line-height:13px;color:#fff;font-weight:bold;">Apr</div><div class="t" style="left:631.9px;width:80px;text-align:center;top:600px;font-size:10.2px;line-height:13px;color:#fff;font-weight:bold;">Net</div><div class="t" style="left:718.3px;width:80px;text-align:center;top:581px;font-size:10.2px;line-height:13px;color:#fff;font-weight:bold;">May</div><div class="t" style="left:718.3px;width:80px;text-align:center;top:600px;font-size:10.2px;line-height:13px;color:#fff;font-weight:bold;">Net</div><div class="t" style="left:804.8px;width:80px;text-align:center;top:581px;font-size:10.2px;line-height:13px;color:#fff;font-weight:bold;">Jun</div><div class="t" style="left:804.8px;width:80px;text-align:center;top:600px;font-size:10.2px;line-height:13px;color:#fff;font-weight:bold;">Net</div><div class="t" style="left:891.2px;width:80px;text-align:center;top:581px;font-size:10.2px;line-height:13px;color:#fff;font-weight:bold;">Jul</div><div class="t" style="left:891.2px;width:80px;text-align:center;top:600px;font-size:10.2px;line-height:13px;color:#fff;font-weight:bold;">Net</div><div class="t" style="left:977.7px;width:80px;text-align:center;top:581px;font-size:10.2px;line-height:13px;color:#fff;font-weight:bold;">Aug</div><div class="t" style="left:977.7px;width:80px;text-align:center;top:600px;font-size:10.2px;line-height:13px;color:#fff;font-weight:bold;">Net</div><div class="t" style="left:1064.1px;width:80px;text-align:center;top:581px;font-size:10.2px;line-height:13px;color:#fff;font-weight:bold;">Sep</div><div class="t" style="left:1064.1px;width:80px;text-align:center;top:600px;font-size:10.2px;line-height:13px;color:#fff;font-weight:bold;">Net</div><div class="t" style="left:1150.6px;width:80px;text-align:center;top:581px;font-size:10.2px;line-height:13px;color:#fff;font-weight:bold;">Oct</div><div class="t" style="left:1150.6px;width:80px;text-align:center;top:600px;font-size:10.2px;line-height:13px;color:#fff;font-weight:bold;">Net</div><div class="t" style="left:1237.0px;width:80px;text-align:center;top:581px;font-size:10.2px;line-height:13px;color:#fff;font-weight:bold;">Nov</div><div class="t" style="left:1237.0px;width:80px;text-align:center;top:600px;font-size:10.2px;line-height:13px;color:#fff;font-weight:bold;">Net</div><div class="t" style="left:1323.5px;width:80px;text-align:center;top:581px;font-size:10.2px;line-height:13px;color:#fff;font-weight:bold;">Dec</div><div class="t" style="left:1323.5px;width:80px;text-align:center;top:600px;font-size:10.2px;line-height:13px;color:#fff;font-weight:bold;">Net</div><div class="t" style="left:121px;width:80px;text-align:center;top:600px;font-size:10.2px;line-height:13px;color:#fff;font-weight:bold;">Acct</div><div class="t" style="left:199px;top:600px;font-size:10.2px;line-height:13px;color:#fff;font-weight:bold;">Account Description</div><div class="t" style="left:1411.5px;width:80px;text-align:center;top:563.5px;font-size:10.2px;line-height:13px;color:#fff;font-weight:bold;">Act CY</div><div class="t" style="left:1411.5px;width:80px;text-align:center;top:589px;font-size:10.2px;line-height:13px;color:#fff;font-weight:bold;">Total</div><div class="t" style="left:1506px;width:80px;text-align:center;top:563.5px;font-size:10.2px;line-height:13px;color:#fff;font-weight:bold;">Act LY</div><div class="t" style="left:1506px;width:80px;text-align:center;top:589px;font-size:10.2px;line-height:13px;color:#fff;font-weight:bold;">Total</div><div class="t" style="left:1590.5px;width:80px;text-align:center;top:581px;font-size:10.2px;line-height:13px;color:#fff;font-weight:bold;">Var (%)</div><div style="position:absolute;left:112px;top:614px;width:1593px;height:320px;overflow:hidden;"><div class="t" style="left:1px;width:97px;text-align:center;top:2.0px;font-size:10.9px;line-height:14px;color:#808080;">1030</div><div class="t" style="left:87px;top:2.0px;font-size:10.7px;line-height:14px;color:#404040;">Cash-US Dollars-US</div><div class="t" style="right:1254.8px;top:2.0px;font-size:10.9px;line-height:14px;color:#404040;">5,298,128</div><div class="t" style="right:1168.3px;top:2.0px;font-size:10.9px;line-height:14px;color:#404040;">6,899,359</div><div class="t" style="right:1081.8px;top:2.0px;font-size:10.9px;line-height:14px;color:#404040;">5,103,799</div><div class="t" style="right:995.4px;top:2.0px;font-size:10.9px;line-height:14px;color:#404040;">6,115,661</div><div class="t" style="right:909.0px;top:2.0px;font-size:10.9px;line-height:14px;color:#404040;">5,793,399</div><div class="t" style="right:822.5px;top:2.0px;font-size:10.9px;line-height:14px;color:#404040;">4,125,769</div><div class="t" style="right:736.0px;top:2.0px;font-size:10.9px;line-height:14px;color:#404040;">4,808,166</div><div class="t" style="right:649.6px;top:2.0px;font-size:10.9px;line-height:14px;color:#404040;">5,498,991</div><div class="t" style="right:563.1px;top:2.0px;font-size:10.9px;line-height:14px;color:#404040;">3,934,519</div><div class="t" style="right:476.7px;top:2.0px;font-size:10.9px;line-height:14px;color:#404040;">4,559,788</div><div class="t" style="right:390.2px;top:2.0px;font-size:10.9px;line-height:14px;color:#404040;">6,125,456</div><div class="t" style="right:303.8px;top:2.0px;font-size:10.9px;line-height:14px;color:#404040;">6,361,412</div><div class="t" style="right:215.6px;top:2.0px;font-size:10.9px;line-height:14px;color:#404040;">64,624,447</div><div class="t" style="right:121.6px;top:2.0px;font-size:10.9px;line-height:14px;color:#404040;">55,696,234</div><div class="t" style="right:42.7px;top:2.0px;font-size:10.9px;line-height:14px;color:#444;"><svg width="9" height="9" style="vertical-align:-0.5px;margin-right:1.5px"><path d="M0.5 8.8 L4.5 0.3 L8.5 8.8Z" fill="#000"/></svg>13.82%</div><div class="t" style="left:1px;width:97px;text-align:center;top:18.0px;font-size:10.9px;line-height:14px;color:#808080;">1031</div><div class="t" style="left:87px;top:18.0px;font-size:10.7px;line-height:14px;color:#404040;">Cash US Dollars</div><div class="t" style="right:1254.8px;top:18.0px;font-size:10.9px;line-height:14px;color:#404040;">5,015,505</div><div class="t" style="right:1168.3px;top:18.0px;font-size:10.9px;line-height:14px;color:#404040;">4,793,576</div><div class="t" style="right:1081.8px;top:18.0px;font-size:10.9px;line-height:14px;color:#404040;">6,098,509</div><div class="t" style="right:995.4px;top:18.0px;font-size:10.9px;line-height:14px;color:#404040;">6,997,629</div><div class="t" style="right:909.0px;top:18.0px;font-size:10.9px;line-height:14px;color:#404040;">4,845,737</div><div class="t" style="right:822.5px;top:18.0px;font-size:10.9px;line-height:14px;color:#404040;">5,761,532</div><div class="t" style="right:736.0px;top:18.0px;font-size:10.9px;line-height:14px;color:#404040;">5,216,522</div><div class="t" style="right:649.6px;top:18.0px;font-size:10.9px;line-height:14px;color:#404040;">4,610,875</div><div class="t" style="right:563.1px;top:18.0px;font-size:10.9px;line-height:14px;color:#404040;">5,419,170</div><div class="t" style="right:476.7px;top:18.0px;font-size:10.9px;line-height:14px;color:#404040;">6,728,758</div><div class="t" style="right:390.2px;top:18.0px;font-size:10.9px;line-height:14px;color:#404040;">4,465,964</div><div class="t" style="right:303.8px;top:18.0px;font-size:10.9px;line-height:14px;color:#404040;">5,469,550</div><div class="t" style="right:215.6px;top:18.0px;font-size:10.9px;line-height:14px;color:#404040;">65,423,327</div><div class="t" style="right:121.6px;top:18.0px;font-size:10.9px;line-height:14px;color:#404040;">56,289,097</div><div class="t" style="right:42.7px;top:18.0px;font-size:10.9px;line-height:14px;color:#444;"><svg width="9" height="9" style="vertical-align:-0.5px;margin-right:1.5px"><path d="M0.5 8.8 L4.5 0.3 L8.5 8.8Z" fill="#000"/></svg>13.96%</div><div class="t" style="left:1px;width:97px;text-align:center;top:34.0px;font-size:10.9px;line-height:14px;color:#808080;">1037</div><div class="t" style="left:87px;top:34.0px;font-size:10.7px;line-height:14px;color:#404040;">Cash US Dollars-Main</div><div class="t" style="right:1254.8px;top:34.0px;font-size:10.9px;line-height:14px;color:#404040;">161,956</div><div class="t" style="right:1168.3px;top:34.0px;font-size:10.9px;line-height:14px;color:#404040;">188,397</div><div class="t" style="right:1081.8px;top:34.0px;font-size:10.9px;line-height:14px;color:#404040;">164,882</div><div class="t" style="right:995.4px;top:34.0px;font-size:10.9px;line-height:14px;color:#404040;">124,518</div><div class="t" style="right:909.0px;top:34.0px;font-size:10.9px;line-height:14px;color:#404040;">137,574</div><div class="t" style="right:822.5px;top:34.0px;font-size:10.9px;line-height:14px;color:#404040;">170,910</div><div class="t" style="right:736.0px;top:34.0px;font-size:10.9px;line-height:14px;color:#404040;">184,156</div><div class="t" style="right:649.6px;top:34.0px;font-size:10.9px;line-height:14px;color:#404040;">147,237</div><div class="t" style="right:563.1px;top:34.0px;font-size:10.9px;line-height:14px;color:#404040;">209,058</div><div class="t" style="right:476.7px;top:34.0px;font-size:10.9px;line-height:14px;color:#404040;">202,181</div><div class="t" style="right:390.2px;top:34.0px;font-size:10.9px;line-height:14px;color:#404040;">145,245</div><div class="t" style="right:303.8px;top:34.0px;font-size:10.9px;line-height:14px;color:#404040;">200,000</div><div class="t" style="right:215.6px;top:34.0px;font-size:10.9px;line-height:14px;color:#404040;">2,036,114</div><div class="t" style="right:121.6px;top:34.0px;font-size:10.9px;line-height:14px;color:#404040;">1,859,865</div><div class="t" style="right:42.7px;top:34.0px;font-size:10.9px;line-height:14px;color:#444;"><svg width="9" height="9" style="vertical-align:-0.5px;margin-right:1.5px"><path d="M0.5 8.8 L4.5 0.3 L8.5 8.8Z" fill="#000"/></svg>8.66%</div><div class="t" style="left:1px;width:97px;text-align:center;top:51.0px;font-size:10.9px;line-height:14px;color:#808080;">1040</div><div class="t" style="left:87px;top:51.0px;font-size:10.7px;line-height:14px;color:#404040;">Cash US Dollars-Corporate</div><div class="t" style="right:1254.8px;top:51.0px;font-size:10.9px;line-height:14px;color:#404040;">1,016,722</div><div class="t" style="right:1168.3px;top:51.0px;font-size:10.9px;line-height:14px;color:#404040;">1,291,668</div><div class="t" style="right:1081.8px;top:51.0px;font-size:10.9px;line-height:14px;color:#404040;">1,041,839</div><div class="t" style="right:995.4px;top:51.0px;font-size:10.9px;line-height:14px;color:#404040;">760,931</div><div class="t" style="right:909.0px;top:51.0px;font-size:10.9px;line-height:14px;color:#404040;">987,168</div><div class="t" style="right:822.5px;top:51.0px;font-size:10.9px;line-height:14px;color:#404040;">1,120,243</div><div class="t" style="right:736.0px;top:51.0px;font-size:10.9px;line-height:14px;color:#404040;">1,003,976</div><div class="t" style="right:649.6px;top:51.0px;font-size:10.9px;line-height:14px;color:#404040;">1,049,408</div><div class="t" style="right:563.1px;top:51.0px;font-size:10.9px;line-height:14px;color:#404040;">1,292,415</div><div class="t" style="right:476.7px;top:51.0px;font-size:10.9px;line-height:14px;color:#404040;">833,835</div><div class="t" style="right:390.2px;top:51.0px;font-size:10.9px;line-height:14px;color:#404040;">1,343,655</div><div class="t" style="right:303.8px;top:51.0px;font-size:10.9px;line-height:14px;color:#404040;">1,316,851</div><div class="t" style="right:215.6px;top:51.0px;font-size:10.9px;line-height:14px;color:#404040;">13,058,711</div><div class="t" style="right:121.6px;top:51.0px;font-size:10.9px;line-height:14px;color:#404040;">11,115,345</div><div class="t" style="right:42.7px;top:51.0px;font-size:10.9px;line-height:14px;color:#444;"><svg width="9" height="9" style="vertical-align:-0.5px;margin-right:1.5px"><path d="M0.5 8.8 L4.5 0.3 L8.5 8.8Z" fill="#000"/></svg>14.88%</div><div class="t" style="left:1px;width:97px;text-align:center;top:67.0px;font-size:10.9px;line-height:14px;color:#808080;">1110</div><div class="t" style="left:87px;top:67.0px;font-size:10.7px;line-height:14px;color:#404040;">A/R Trade-USD</div><div class="t" style="right:1254.8px;top:67.0px;font-size:10.9px;line-height:14px;color:#404040;">17,774</div><div class="t" style="right:1168.3px;top:67.0px;font-size:10.9px;line-height:14px;color:#404040;">123,783</div><div class="t" style="right:1081.8px;top:67.0px;font-size:10.9px;line-height:14px;color:#404040;">102,999</div><div class="t" style="right:995.4px;top:67.0px;font-size:10.9px;line-height:14px;color:#404040;">128,060</div><div class="t" style="right:909.0px;top:67.0px;font-size:10.9px;line-height:14px;color:#404040;">58,799</div><div class="t" style="right:822.5px;top:67.0px;font-size:10.9px;line-height:14px;color:#404040;">49,774</div><div class="t" style="right:736.0px;top:67.0px;font-size:10.9px;line-height:14px;color:#404040;">121,955</div><div class="t" style="right:649.6px;top:67.0px;font-size:10.9px;line-height:14px;color:#404040;">131,396</div><div class="t" style="right:563.1px;top:67.0px;font-size:10.9px;line-height:14px;color:#404040;">59,270</div><div class="t" style="right:476.7px;top:67.0px;font-size:10.9px;line-height:14px;color:#404040;">14,177</div><div class="t" style="right:390.2px;top:67.0px;font-size:10.9px;line-height:14px;color:#404040;">20,660</div><div class="t" style="right:303.8px;top:67.0px;font-size:10.9px;line-height:14px;color:#404040;">19,304</div><div class="t" style="right:215.6px;top:67.0px;font-size:10.9px;line-height:14px;color:#404040;">847,951</div><div class="t" style="right:121.6px;top:67.0px;font-size:10.9px;line-height:14px;color:#404040;">1,119,797</div><div class="t" style="right:42.7px;top:67.0px;font-size:10.9px;line-height:14px;color:#f03c44;"><svg width="9" height="9" style="vertical-align:-0.5px;margin-right:1.5px"><path d="M0.5 0.2 L4.5 8.7 L8.5 0.2Z" fill="#ff0000"/></svg>32.06%</div><div class="t" style="left:1px;width:97px;text-align:center;top:83.0px;font-size:10.9px;line-height:14px;color:#808080;">1150</div><div class="t" style="left:87px;top:83.0px;font-size:10.7px;line-height:14px;color:#404040;">Due From Company 0010</div><div class="t" style="right:1254.8px;top:83.0px;font-size:10.9px;line-height:14px;color:#404040;">20,656</div><div class="t" style="right:1168.3px;top:83.0px;font-size:10.9px;line-height:14px;color:#404040;">128,850</div><div class="t" style="right:1081.8px;top:83.0px;font-size:10.9px;line-height:14px;color:#404040;">6,649</div><div class="t" style="right:992.0px;top:83.0px;font-size:10.9px;line-height:14px;color:#404040;">(282,381)</div><div class="t" style="right:905.6px;top:83.0px;font-size:10.9px;line-height:14px;color:#404040;">(239,091)</div><div class="t" style="right:822.5px;top:83.0px;font-size:10.9px;line-height:14px;color:#404040;">4,120</div><div class="t" style="right:736.0px;top:83.0px;font-size:10.9px;line-height:14px;color:#404040;">24,886</div><div class="t" style="right:649.6px;top:83.0px;font-size:10.9px;line-height:14px;color:#404040;">191,891</div><div class="t" style="right:563.1px;top:83.0px;font-size:10.9px;line-height:14px;color:#404040;">91,303</div><div class="t" style="right:476.7px;top:83.0px;font-size:10.9px;line-height:14px;color:#404040;">239,411</div><div class="t" style="right:386.9px;top:83.0px;font-size:10.9px;line-height:14px;color:#404040;">(700)</div><div class="t" style="left:1273.2px;top:83.0px;font-size:10.9px;line-height:14px;color:#404040;">-</div><div class="t" style="right:215.6px;top:83.0px;font-size:10.9px;line-height:14px;color:#404040;">185,594</div><div class="t" style="right:121.6px;top:83.0px;font-size:10.9px;line-height:14px;color:#404040;">899,736</div><div class="t" style="right:42.7px;top:83.0px;font-size:10.9px;line-height:14px;color:#f03c44;"><svg width="9" height="9" style="vertical-align:-0.5px;margin-right:1.5px"><path d="M0.5 0.2 L4.5 8.7 L8.5 0.2Z" fill="#ff0000"/></svg>384.79%</div><div class="t" style="left:1px;width:97px;text-align:center;top:100.0px;font-size:10.9px;line-height:14px;color:#808080;">1151</div><div class="t" style="left:87px;top:100.0px;font-size:10.7px;line-height:14px;color:#404040;">Due From Company 0020</div><div class="t" style="right:1251.3px;top:100.0px;font-size:10.9px;line-height:14px;color:#404040;">(13,350)</div><div class="t" style="right:1168.3px;top:100.0px;font-size:10.9px;line-height:14px;color:#404040;">22,506</div><div class="t" style="right:1081.8px;top:100.0px;font-size:10.9px;line-height:14px;color:#404040;">73,173</div><div class="t" style="right:995.4px;top:100.0px;font-size:10.9px;line-height:14px;color:#404040;">65,709</div><div class="t" style="right:909.0px;top:100.0px;font-size:10.9px;line-height:14px;color:#404040;">41,276</div><div class="t" style="right:822.5px;top:100.0px;font-size:10.9px;line-height:14px;color:#404040;">79,551</div><div class="t" style="right:736.0px;top:100.0px;font-size:10.9px;line-height:14px;color:#404040;">90,527</div><div class="t" style="right:649.6px;top:100.0px;font-size:10.9px;line-height:14px;color:#404040;">34,979</div><div class="t" style="right:563.1px;top:100.0px;font-size:10.9px;line-height:14px;color:#404040;">35,892</div><div class="t" style="right:476.7px;top:100.0px;font-size:10.9px;line-height:14px;color:#404040;">50,490</div><div class="t" style="left:1186.8px;top:100.0px;font-size:10.9px;line-height:14px;color:#404040;">-</div><div class="t" style="left:1273.2px;top:100.0px;font-size:10.9px;line-height:14px;color:#404040;">-</div><div class="t" style="right:215.6px;top:100.0px;font-size:10.9px;line-height:14px;color:#404040;">480,753</div><div class="t" style="right:121.6px;top:100.0px;font-size:10.9px;line-height:14px;color:#404040;">836,030</div><div class="t" style="right:42.7px;top:100.0px;font-size:10.9px;line-height:14px;color:#f03c44;"><svg width="9" height="9" style="vertical-align:-0.5px;margin-right:1.5px"><path d="M0.5 0.2 L4.5 8.7 L8.5 0.2Z" fill="#ff0000"/></svg>73.90%</div><div class="t" style="left:1px;width:97px;text-align:center;top:116.0px;font-size:10.9px;line-height:14px;color:#808080;">1156</div><div class="t" style="left:87px;top:116.0px;font-size:10.7px;line-height:14px;color:#404040;">Due From Company 0070</div><div class="t" style="right:1254.8px;top:116.0px;font-size:10.9px;line-height:14px;color:#404040;">39,201</div><div class="t" style="right:1164.9px;top:116.0px;font-size:10.9px;line-height:14px;color:#404040;">(257,496)</div><div class="t" style="right:1078.4px;top:116.0px;font-size:10.9px;line-height:14px;color:#404040;">(373,665)</div><div class="t" style="right:995.4px;top:116.0px;font-size:10.9px;line-height:14px;color:#404040;">9,954</div><div class="t" style="right:905.6px;top:116.0px;font-size:10.9px;line-height:14px;color:#404040;">(332,007)</div><div class="t" style="right:819.1px;top:116.0px;font-size:10.9px;line-height:14px;color:#404040;">(318,477)</div><div class="t" style="right:732.6px;top:116.0px;font-size:10.9px;line-height:14px;color:#404040;">(272,280)</div><div class="t" style="right:646.2px;top:116.0px;font-size:10.9px;line-height:14px;color:#404040;">(380,982)</div><div class="t" style="right:559.7px;top:116.0px;font-size:10.9px;line-height:14px;color:#404040;">(706,097)</div><div class="t" style="right:473.3px;top:116.0px;font-size:10.9px;line-height:14px;color:#404040;">(136,892)</div><div class="t" style="right:390.2px;top:116.0px;font-size:10.9px;line-height:14px;color:#404040;">90,332</div><div class="t" style="right:300.4px;top:116.0px;font-size:10.9px;line-height:14px;color:#404040;">(52,742)</div><div class="t" style="right:212.2px;top:116.0px;font-size:10.9px;line-height:14px;color:#404040;">(2,691,151)</div><div class="t" style="right:118.2px;top:116.0px;font-size:10.9px;line-height:14px;color:#404040;">(3,556,345)</div><div class="t" style="right:42.7px;top:116.0px;font-size:10.9px;line-height:14px;color:#f03c44;"><svg width="9" height="9" style="vertical-align:-0.5px;margin-right:1.5px"><path d="M0.5 0.2 L4.5 8.7 L8.5 0.2Z" fill="#ff0000"/></svg>32.15%</div><div class="t" style="left:1px;width:97px;text-align:center;top:132.0px;font-size:10.9px;line-height:14px;color:#808080;">1157</div><div class="t" style="left:87px;top:132.0px;font-size:10.7px;line-height:14px;color:#404040;">Due From Company 0080</div><div class="t" style="right:1251.3px;top:132.0px;font-size:10.9px;line-height:14px;color:#404040;">(4,750)</div><div class="t" style="right:1164.9px;top:132.0px;font-size:10.9px;line-height:14px;color:#404040;">(42,105)</div><div class="t" style="right:1081.8px;top:132.0px;font-size:10.9px;line-height:14px;color:#404040;">33,480</div><div class="t" style="right:995.4px;top:132.0px;font-size:10.9px;line-height:14px;color:#404040;">198,290</div><div class="t" style="right:909.0px;top:132.0px;font-size:10.9px;line-height:14px;color:#404040;">21,346</div><div class="t" style="right:819.1px;top:132.0px;font-size:10.9px;line-height:14px;color:#404040;">(84,043)</div><div class="t" style="right:736.0px;top:132.0px;font-size:10.9px;line-height:14px;color:#404040;">157,901</div><div class="t" style="right:649.6px;top:132.0px;font-size:10.9px;line-height:14px;color:#404040;">76,504</div><div class="t" style="right:563.1px;top:132.0px;font-size:10.9px;line-height:14px;color:#404040;">62,948</div><div class="t" style="right:473.3px;top:132.0px;font-size:10.9px;line-height:14px;color:#404040;">(150,357)</div><div class="t" style="right:386.9px;top:132.0px;font-size:10.9px;line-height:14px;color:#404040;">(59,825)</div><div class="t" style="right:303.8px;top:132.0px;font-size:10.9px;line-height:14px;color:#404040;">80,752</div><div class="t" style="right:215.6px;top:132.0px;font-size:10.9px;line-height:14px;color:#404040;">290,141</div><div class="t" style="right:118.2px;top:132.0px;font-size:10.9px;line-height:14px;color:#404040;">(781,710)</div><div class="t" style="right:42.7px;top:132.0px;font-size:10.9px;line-height:14px;color:#444;"><svg width="9" height="9" style="vertical-align:-0.5px;margin-right:1.5px"><path d="M0.5 8.8 L4.5 0.3 L8.5 8.8Z" fill="#000"/></svg>369.42%</div><div class="t" style="left:1px;width:97px;text-align:center;top:149.0px;font-size:10.9px;line-height:14px;color:#808080;">1170</div><div class="t" style="left:87px;top:149.0px;font-size:10.7px;line-height:14px;color:#404040;">Notes Receivable-USD</div><div class="t" style="right:1254.8px;top:149.0px;font-size:10.9px;line-height:14px;color:#404040;">13,248</div><div class="t" style="right:1168.3px;top:149.0px;font-size:10.9px;line-height:14px;color:#404040;">12,300</div><div class="t" style="right:1081.8px;top:149.0px;font-size:10.9px;line-height:14px;color:#404040;">15,334</div><div class="t" style="right:995.4px;top:149.0px;font-size:10.9px;line-height:14px;color:#404040;">13,414</div><div class="t" style="right:909.0px;top:149.0px;font-size:10.9px;line-height:14px;color:#404040;">14,014</div><div class="t" style="right:822.5px;top:149.0px;font-size:10.9px;line-height:14px;color:#404040;">17,035</div><div class="t" style="right:736.0px;top:149.0px;font-size:10.9px;line-height:14px;color:#404040;">15,091</div><div class="t" style="right:649.6px;top:149.0px;font-size:10.9px;line-height:14px;color:#404040;">19,185</div><div class="t" style="right:563.1px;top:149.0px;font-size:10.9px;line-height:14px;color:#404040;">16,430</div><div class="t" style="right:476.7px;top:149.0px;font-size:10.9px;line-height:14px;color:#404040;">13,790</div><div class="t" style="right:390.2px;top:149.0px;font-size:10.9px;line-height:14px;color:#404040;">19,720</div><div class="t" style="right:303.8px;top:149.0px;font-size:10.9px;line-height:14px;color:#404040;">13,790</div><div class="t" style="right:215.6px;top:149.0px;font-size:10.9px;line-height:14px;color:#404040;">183,352</div><div class="t" style="right:121.6px;top:149.0px;font-size:10.9px;line-height:14px;color:#404040;">166,112</div><div class="t" style="right:42.7px;top:149.0px;font-size:10.9px;line-height:14px;color:#444;"><svg width="9" height="9" style="vertical-align:-0.5px;margin-right:1.5px"><path d="M0.5 8.8 L4.5 0.3 L8.5 8.8Z" fill="#000"/></svg>9.40%</div><div class="t" style="left:1px;width:97px;text-align:center;top:165.0px;font-size:10.9px;line-height:14px;color:#808080;">1191</div><div class="t" style="left:87px;top:165.0px;font-size:10.7px;line-height:14px;color:#404040;">Miscellaneous Receivables</div><div class="t" style="right:1254.8px;top:165.0px;font-size:10.9px;line-height:14px;color:#404040;">10,676</div><div class="t" style="right:1168.3px;top:165.0px;font-size:10.9px;line-height:14px;color:#404040;">11,194</div><div class="t" style="right:1081.8px;top:165.0px;font-size:10.9px;line-height:14px;color:#404040;">13,809</div><div class="t" style="right:995.4px;top:165.0px;font-size:10.9px;line-height:14px;color:#404040;">12,589</div><div class="t" style="right:909.0px;top:165.0px;font-size:10.9px;line-height:14px;color:#404040;">13,015</div><div class="t" style="right:822.5px;top:165.0px;font-size:10.9px;line-height:14px;color:#404040;">10,980</div><div class="t" style="right:736.0px;top:165.0px;font-size:10.9px;line-height:14px;color:#404040;">16,453</div><div class="t" style="right:649.6px;top:165.0px;font-size:10.9px;line-height:14px;color:#404040;">15,685</div><div class="t" style="right:563.1px;top:165.0px;font-size:10.9px;line-height:14px;color:#404040;">10,878</div><div class="t" style="right:476.7px;top:165.0px;font-size:10.9px;line-height:14px;color:#404040;">15,137</div><div class="t" style="right:390.2px;top:165.0px;font-size:10.9px;line-height:14px;color:#404040;">13,317</div><div class="t" style="right:303.8px;top:165.0px;font-size:10.9px;line-height:14px;color:#404040;">15,137</div><div class="t" style="right:215.6px;top:165.0px;font-size:10.9px;line-height:14px;color:#404040;">158,870</div><div class="t" style="right:121.6px;top:165.0px;font-size:10.9px;line-height:14px;color:#404040;">148,688</div><div class="t" style="right:42.7px;top:165.0px;font-size:10.9px;line-height:14px;color:#444;"><svg width="9" height="9" style="vertical-align:-0.5px;margin-right:1.5px"><path d="M0.5 8.8 L4.5 0.3 L8.5 8.8Z" fill="#000"/></svg>6.41%</div><div class="t" style="left:1px;width:97px;text-align:center;top:181.0px;font-size:10.9px;line-height:14px;color:#808080;">1210</div><div class="t" style="left:87px;top:181.0px;font-size:10.7px;line-height:14px;color:#404040;">Inventory-Merchandise</div><div class="t" style="right:1254.8px;top:181.0px;font-size:10.9px;line-height:14px;color:#404040;">532,465</div><div class="t" style="right:1168.3px;top:181.0px;font-size:10.9px;line-height:14px;color:#404040;">613,002</div><div class="t" style="right:1081.8px;top:181.0px;font-size:10.9px;line-height:14px;color:#404040;">593,171</div><div class="t" style="right:995.4px;top:181.0px;font-size:10.9px;line-height:14px;color:#404040;">427,274</div><div class="t" style="right:909.0px;top:181.0px;font-size:10.9px;line-height:14px;color:#404040;">419,137</div><div class="t" style="right:822.5px;top:181.0px;font-size:10.9px;line-height:14px;color:#404040;">494,993</div><div class="t" style="right:736.0px;top:181.0px;font-size:10.9px;line-height:14px;color:#404040;">442,517</div><div class="t" style="right:649.6px;top:181.0px;font-size:10.9px;line-height:14px;color:#404040;">523,640</div><div class="t" style="right:563.1px;top:181.0px;font-size:10.9px;line-height:14px;color:#404040;">681,409</div><div class="t" style="right:476.7px;top:181.0px;font-size:10.9px;line-height:14px;color:#404040;">421,518</div><div class="t" style="right:390.2px;top:181.0px;font-size:10.9px;line-height:14px;color:#404040;">673,956</div><div class="t" style="right:303.8px;top:181.0px;font-size:10.9px;line-height:14px;color:#404040;">702,993</div><div class="t" style="right:215.6px;top:181.0px;font-size:10.9px;line-height:14px;color:#404040;">6,526,075</div><div class="t" style="right:121.6px;top:181.0px;font-size:10.9px;line-height:14px;color:#404040;">6,596,862</div><div class="t" style="right:42.7px;top:181.0px;font-size:10.9px;line-height:14px;color:#f03c44;"><svg width="9" height="9" style="vertical-align:-0.5px;margin-right:1.5px"><path d="M0.5 0.2 L4.5 8.7 L8.5 0.2Z" fill="#ff0000"/></svg>1.08%</div><div class="t" style="left:1px;width:97px;text-align:center;top:198.0px;font-size:10.9px;line-height:14px;color:#808080;">1620</div><div class="t" style="left:87px;top:198.0px;font-size:10.7px;line-height:14px;color:#404040;">Buildings</div><div class="t" style="right:1254.8px;top:198.0px;font-size:10.9px;line-height:14px;color:#404040;">1,156,158</div><div class="t" style="right:1168.3px;top:198.0px;font-size:10.9px;line-height:14px;color:#404040;">1,303,037</div><div class="t" style="right:1081.8px;top:198.0px;font-size:10.9px;line-height:14px;color:#404040;">1,685,860</div><div class="t" style="right:995.4px;top:198.0px;font-size:10.9px;line-height:14px;color:#404040;">1,866,689</div><div class="t" style="right:909.0px;top:198.0px;font-size:10.9px;line-height:14px;color:#404040;">1,929,079</div><div class="t" style="right:822.5px;top:198.0px;font-size:10.9px;line-height:14px;color:#404040;">1,997,332</div><div class="t" style="right:736.0px;top:198.0px;font-size:10.9px;line-height:14px;color:#404040;">1,627,546</div><div class="t" style="right:649.6px;top:198.0px;font-size:10.9px;line-height:14px;color:#404040;">1,190,934</div><div class="t" style="right:563.1px;top:198.0px;font-size:10.9px;line-height:14px;color:#404040;">1,211,885</div><div class="t" style="right:476.7px;top:198.0px;font-size:10.9px;line-height:14px;color:#404040;">1,001,318</div><div class="t" style="right:390.2px;top:198.0px;font-size:10.9px;line-height:14px;color:#404040;">1,369,786</div><div class="t" style="right:303.8px;top:198.0px;font-size:10.9px;line-height:14px;color:#404040;">1,765,137</div><div class="t" style="right:215.6px;top:198.0px;font-size:10.9px;line-height:14px;color:#404040;">18,104,761</div><div class="t" style="right:121.6px;top:198.0px;font-size:10.9px;line-height:14px;color:#404040;">16,573,112</div><div class="t" style="right:42.7px;top:198.0px;font-size:10.9px;line-height:14px;color:#444;"><svg width="9" height="9" style="vertical-align:-0.5px;margin-right:1.5px"><path d="M0.5 8.8 L4.5 0.3 L8.5 8.8Z" fill="#000"/></svg>8.46%</div><div class="t" style="left:1px;width:97px;text-align:center;top:214.0px;font-size:10.9px;line-height:14px;color:#808080;">1621</div><div class="t" style="left:87px;top:214.0px;font-size:10.7px;line-height:14px;color:#404040;">Accumulated Depreciation</div><div class="t" style="right:1251.3px;top:214.0px;font-size:10.9px;line-height:14px;color:#404040;">(14,756)</div><div class="t" style="right:1164.9px;top:214.0px;font-size:10.9px;line-height:14px;color:#404040;">(11,590)</div><div class="t" style="right:1078.4px;top:214.0px;font-size:10.9px;line-height:14px;color:#404040;">(13,006)</div><div class="t" style="right:992.0px;top:214.0px;font-size:10.9px;line-height:14px;color:#404040;">(11,294)</div><div class="t" style="right:905.6px;top:214.0px;font-size:10.9px;line-height:14px;color:#404040;">(9,409)</div><div class="t" style="right:819.1px;top:214.0px;font-size:10.9px;line-height:14px;color:#404040;">(11,129)</div><div class="t" style="right:732.6px;top:214.0px;font-size:10.9px;line-height:14px;color:#404040;">(16,568)</div><div class="t" style="right:646.2px;top:214.0px;font-size:10.9px;line-height:14px;color:#404040;">(13,599)</div><div class="t" style="right:559.7px;top:214.0px;font-size:10.9px;line-height:14px;color:#404040;">(15,715)</div><div class="t" style="right:473.3px;top:214.0px;font-size:10.9px;line-height:14px;color:#404040;">(15,004)</div><div class="t" style="right:386.9px;top:214.0px;font-size:10.9px;line-height:14px;color:#404040;">(15,004)</div><div class="t" style="right:300.4px;top:214.0px;font-size:10.9px;line-height:14px;color:#404040;">(14,299)</div><div class="t" style="right:212.2px;top:214.0px;font-size:10.9px;line-height:14px;color:#404040;">(161,374)</div><div class="t" style="right:118.2px;top:214.0px;font-size:10.9px;line-height:14px;color:#404040;">(145,810)</div><div class="t" style="right:42.7px;top:214.0px;font-size:10.9px;line-height:14px;color:#444;"><svg width="9" height="9" style="vertical-align:-0.5px;margin-right:1.5px"><path d="M0.5 8.8 L4.5 0.3 L8.5 8.8Z" fill="#000"/></svg>9.64%</div><div class="t" style="left:1px;width:97px;text-align:center;top:230.0px;font-size:10.9px;line-height:14px;color:#808080;">1630</div><div class="t" style="left:87px;top:230.0px;font-size:10.7px;line-height:14px;color:#404040;">Furniture &amp; Fixtures</div><div class="t" style="right:1254.8px;top:230.0px;font-size:10.9px;line-height:14px;color:#404040;">495,581</div><div class="t" style="right:1168.3px;top:230.0px;font-size:10.9px;line-height:14px;color:#404040;">440,847</div><div class="t" style="right:1081.8px;top:230.0px;font-size:10.9px;line-height:14px;color:#404040;">395,306</div><div class="t" style="right:995.4px;top:230.0px;font-size:10.9px;line-height:14px;color:#404040;">416,790</div><div class="t" style="right:909.0px;top:230.0px;font-size:10.9px;line-height:14px;color:#404040;">457,500</div><div class="t" style="right:822.5px;top:230.0px;font-size:10.9px;line-height:14px;color:#404040;">279,275</div><div class="t" style="right:736.0px;top:230.0px;font-size:10.9px;line-height:14px;color:#404040;">388,116</div><div class="t" style="right:649.6px;top:230.0px;font-size:10.9px;line-height:14px;color:#404040;">479,077</div><div class="t" style="right:563.1px;top:230.0px;font-size:10.9px;line-height:14px;color:#404040;">339,848</div><div class="t" style="right:476.7px;top:230.0px;font-size:10.9px;line-height:14px;color:#404040;">300,000</div><div class="t" style="right:390.2px;top:230.0px;font-size:10.9px;line-height:14px;color:#404040;">513,740</div><div class="t" style="right:303.8px;top:230.0px;font-size:10.9px;line-height:14px;color:#404040;">474,470</div><div class="t" style="right:215.6px;top:230.0px;font-size:10.9px;line-height:14px;color:#404040;">4,980,550</div><div class="t" style="right:121.6px;top:230.0px;font-size:10.9px;line-height:14px;color:#404040;">4,340,069</div><div class="t" style="right:42.7px;top:230.0px;font-size:10.9px;line-height:14px;color:#444;"><svg width="9" height="9" style="vertical-align:-0.5px;margin-right:1.5px"><path d="M0.5 8.8 L4.5 0.3 L8.5 8.8Z" fill="#000"/></svg>12.86%</div><div class="t" style="left:1px;width:97px;text-align:center;top:247.0px;font-size:10.9px;line-height:14px;color:#808080;">1631</div><div class="t" style="left:87px;top:247.0px;font-size:10.7px;line-height:14px;color:#404040;">Less: Accumulated Deprec.</div><div class="t" style="right:1251.3px;top:247.0px;font-size:10.9px;line-height:14px;color:#404040;">(16,949)</div><div class="t" style="right:1164.9px;top:247.0px;font-size:10.9px;line-height:14px;color:#404040;">(15,856)</div><div class="t" style="right:1078.4px;top:247.0px;font-size:10.9px;line-height:14px;color:#404040;">(14,454)</div><div class="t" style="right:992.0px;top:247.0px;font-size:10.9px;line-height:14px;color:#404040;">(18,540)</div><div class="t" style="right:905.6px;top:247.0px;font-size:10.9px;line-height:14px;color:#404040;">(12,026)</div><div class="t" style="right:819.1px;top:247.0px;font-size:10.9px;line-height:14px;color:#404040;">(15,956)</div><div class="t" style="right:732.6px;top:247.0px;font-size:10.9px;line-height:14px;color:#404040;">(13,572)</div><div class="t" style="right:646.2px;top:247.0px;font-size:10.9px;line-height:14px;color:#404040;">(12,486)</div><div class="t" style="right:559.7px;top:247.0px;font-size:10.9px;line-height:14px;color:#404040;">(12,308)</div><div class="t" style="right:473.3px;top:247.0px;font-size:10.9px;line-height:14px;color:#404040;">(15,476)</div><div class="t" style="right:386.9px;top:247.0px;font-size:10.9px;line-height:14px;color:#404040;">(15,476)</div><div class="t" style="right:300.4px;top:247.0px;font-size:10.9px;line-height:14px;color:#404040;">(15,663)</div><div class="t" style="right:212.2px;top:247.0px;font-size:10.9px;line-height:14px;color:#404040;">(178,762)</div><div class="t" style="right:118.2px;top:247.0px;font-size:10.9px;line-height:14px;color:#404040;">(148,641)</div><div class="t" style="right:42.7px;top:247.0px;font-size:10.9px;line-height:14px;color:#444;"><svg width="9" height="9" style="vertical-align:-0.5px;margin-right:1.5px"><path d="M0.5 8.8 L4.5 0.3 L8.5 8.8Z" fill="#000"/></svg>16.85%</div><div class="t" style="left:1px;width:97px;text-align:center;top:263.0px;font-size:10.9px;line-height:14px;color:#808080;">1640</div><div class="t" style="left:87px;top:263.0px;font-size:10.7px;line-height:14px;color:#404040;">Machines &amp; Equipment</div><div class="t" style="right:1254.8px;top:263.0px;font-size:10.9px;line-height:14px;color:#404040;">1,758,200</div><div class="t" style="right:1168.3px;top:263.0px;font-size:10.9px;line-height:14px;color:#404040;">1,709,379</div><div class="t" style="right:1081.8px;top:263.0px;font-size:10.9px;line-height:14px;color:#404040;">1,893,403</div><div class="t" style="right:995.4px;top:263.0px;font-size:10.9px;line-height:14px;color:#404040;">2,381,291</div><div class="t" style="right:909.0px;top:263.0px;font-size:10.9px;line-height:14px;color:#404040;">2,206,883</div><div class="t" style="right:822.5px;top:263.0px;font-size:10.9px;line-height:14px;color:#404040;">1,541,784</div><div class="t" style="right:736.0px;top:263.0px;font-size:10.9px;line-height:14px;color:#404040;">1,362,026</div><div class="t" style="right:649.6px;top:263.0px;font-size:10.9px;line-height:14px;color:#404040;">2,172,838</div><div class="t" style="right:563.1px;top:263.0px;font-size:10.9px;line-height:14px;color:#404040;">1,384,401</div><div class="t" style="right:476.7px;top:263.0px;font-size:10.9px;line-height:14px;color:#404040;">2,701,909</div><div class="t" style="right:390.2px;top:263.0px;font-size:10.9px;line-height:14px;color:#404040;">1,517,420</div><div class="t" style="right:303.8px;top:263.0px;font-size:10.9px;line-height:14px;color:#404040;">2,233,774</div><div class="t" style="right:215.6px;top:263.0px;font-size:10.9px;line-height:14px;color:#404040;">22,863,308</div><div class="t" style="right:121.6px;top:263.0px;font-size:10.9px;line-height:14px;color:#404040;">18,732,511</div><div class="t" style="right:42.7px;top:263.0px;font-size:10.9px;line-height:14px;color:#444;"><svg width="9" height="9" style="vertical-align:-0.5px;margin-right:1.5px"><path d="M0.5 8.8 L4.5 0.3 L8.5 8.8Z" fill="#000"/></svg>18.07%</div><div class="t" style="left:1px;width:97px;text-align:center;top:279.0px;font-size:10.9px;line-height:14px;color:#808080;">1641</div><div class="t" style="left:87px;top:279.0px;font-size:10.7px;line-height:14px;color:#404040;">Less: Accumulated Deprec.</div><div class="t" style="right:1251.3px;top:279.0px;font-size:10.9px;line-height:14px;color:#404040;">(73,788)</div><div class="t" style="right:1164.9px;top:279.0px;font-size:10.9px;line-height:14px;color:#404040;">(69,059)</div><div class="t" style="right:1078.4px;top:279.0px;font-size:10.9px;line-height:14px;color:#404040;">(85,576)</div><div class="t" style="right:992.0px;top:279.0px;font-size:10.9px;line-height:14px;color:#404040;">(73,666)</div><div class="t" style="right:905.6px;top:279.0px;font-size:10.9px;line-height:14px;color:#404040;">(110,931)</div><div class="t" style="right:819.1px;top:279.0px;font-size:10.9px;line-height:14px;color:#404040;">(104,298)</div><div class="t" style="right:732.6px;top:279.0px;font-size:10.9px;line-height:14px;color:#404040;">(110,993)</div><div class="t" style="right:646.2px;top:279.0px;font-size:10.9px;line-height:14px;color:#404040;">(85,134)</div><div class="t" style="right:559.7px;top:279.0px;font-size:10.9px;line-height:14px;color:#404040;">(101,750)</div><div class="t" style="right:473.3px;top:279.0px;font-size:10.9px;line-height:14px;color:#404040;">(61,448)</div><div class="t" style="right:386.9px;top:279.0px;font-size:10.9px;line-height:14px;color:#404040;">(61,448)</div><div class="t" style="right:300.4px;top:279.0px;font-size:10.9px;line-height:14px;color:#404040;">(101,606)</div><div class="t" style="right:212.2px;top:279.0px;font-size:10.9px;line-height:14px;color:#404040;">(1,039,698)</div><div class="t" style="right:118.2px;top:279.0px;font-size:10.9px;line-height:14px;color:#404040;">(1,019,879)</div><div class="t" style="right:42.7px;top:279.0px;font-size:10.9px;line-height:14px;color:#444;"><svg width="9" height="9" style="vertical-align:-0.5px;margin-right:1.5px"><path d="M0.5 8.8 L4.5 0.3 L8.5 8.8Z" fill="#000"/></svg>1.91%</div><div class="t" style="left:1px;width:97px;text-align:center;top:296.0px;font-size:10.9px;line-height:14px;color:#808080;">1650</div><div class="t" style="left:87px;top:296.0px;font-size:10.7px;line-height:14px;color:#404040;">Automobiles</div><div class="t" style="right:1254.8px;top:296.0px;font-size:10.9px;line-height:14px;color:#404040;">224,979</div><div class="t" style="right:1168.3px;top:296.0px;font-size:10.9px;line-height:14px;color:#404040;">286,303</div><div class="t" style="right:1081.8px;top:296.0px;font-size:10.9px;line-height:14px;color:#404040;">323,126</div><div class="t" style="right:995.4px;top:296.0px;font-size:10.9px;line-height:14px;color:#404040;">288,088</div><div class="t" style="right:909.0px;top:296.0px;font-size:10.9px;line-height:14px;color:#404040;">402,456</div><div class="t" style="right:822.5px;top:296.0px;font-size:10.9px;line-height:14px;color:#404040;">270,379</div><div class="t" style="right:736.0px;top:296.0px;font-size:10.9px;line-height:14px;color:#404040;">273,772</div><div class="t" style="right:649.6px;top:296.0px;font-size:10.9px;line-height:14px;color:#404040;">320,434</div><div class="t" style="right:563.1px;top:296.0px;font-size:10.9px;line-height:14px;color:#404040;">285,515</div><div class="t" style="right:476.7px;top:296.0px;font-size:10.9px;line-height:14px;color:#404040;">200,000</div><div class="t" style="right:390.2px;top:296.0px;font-size:10.9px;line-height:14px;color:#404040;">340,331</div><div class="t" style="right:303.8px;top:296.0px;font-size:10.9px;line-height:14px;color:#404040;">311,367</div><div class="t" style="right:215.6px;top:296.0px;font-size:10.9px;line-height:14px;color:#404040;">3,526,750</div><div class="t" style="right:121.6px;top:296.0px;font-size:10.9px;line-height:14px;color:#404040;">3,193,927</div><div class="t" style="right:42.7px;top:296.0px;font-size:10.9px;line-height:14px;color:#444;"><svg width="9" height="9" style="vertical-align:-0.5px;margin-right:1.5px"><path d="M0.5 8.8 L4.5 0.3 L8.5 8.8Z" fill="#000"/></svg>9.44%</div><div class="t" style="left:1px;width:97px;text-align:center;top:312.0px;font-size:10.9px;line-height:14px;color:#808080;">1651</div><div class="t" style="left:87px;top:312.0px;font-size:10.7px;line-height:14px;color:#404040;">Less: Accumulated Deprec.</div><div class="t" style="right:1251.3px;top:312.0px;font-size:10.9px;line-height:14px;color:#404040;">(3,572)</div><div class="t" style="right:1164.9px;top:312.0px;font-size:10.9px;line-height:14px;color:#404040;">(4,065)</div><div class="t" style="right:1078.4px;top:312.0px;font-size:10.9px;line-height:14px;color:#404040;">(4,011)</div><div class="t" style="right:992.0px;top:312.0px;font-size:10.9px;line-height:14px;color:#404040;">(4,030)</div><div class="t" style="right:905.6px;top:312.0px;font-size:10.9px;line-height:14px;color:#404040;">(4,654)</div><div class="t" style="right:819.1px;top:312.0px;font-size:10.9px;line-height:14px;color:#404040;">(3,841)</div><div class="t" style="right:732.6px;top:312.0px;font-size:10.9px;line-height:14px;color:#404040;">(5,057)</div><div class="t" style="right:646.2px;top:312.0px;font-size:10.9px;line-height:14px;color:#404040;">(3,085)</div><div class="t" style="right:559.7px;top:312.0px;font-size:10.9px;line-height:14px;color:#404040;">(4,170)</div><div class="t" style="right:473.3px;top:312.0px;font-size:10.9px;line-height:14px;color:#404040;">(3,750)</div><div class="t" style="right:386.9px;top:312.0px;font-size:10.9px;line-height:14px;color:#404040;">(3,750)</div><div class="t" style="right:300.4px;top:312.0px;font-size:10.9px;line-height:14px;color:#404040;">(3,002)</div><div class="t" style="right:212.2px;top:312.0px;font-size:10.9px;line-height:14px;color:#404040;">(46,087)</div><div class="t" style="right:118.2px;top:312.0px;font-size:10.9px;line-height:14px;color:#404040;">(43,406)</div><div class="t" style="right:42.7px;top:312.0px;font-size:10.9px;line-height:14px;color:#444;"><svg width="9" height="9" style="vertical-align:-0.5px;margin-right:1.5px"><path d="M0.5 8.8 L4.5 0.3 L8.5 8.8Z" fill="#000"/></svg>7.43%</div></div><div style="position:absolute;left:112px;top:934.5px;width:1593px;height:24.5px;background:#e6e6e6;border-top:1px solid #cfcfcf;box-sizing:border-box;"></div><div style="position:absolute;left:1705px;top:934.5px;width:18px;height:24.5px;background:#e6e6e6;"></div><svg style="position:absolute;left:134px;top:942px" width="40" height="10"><path d="M5.5 2 L2.5 5 L5.5 8" fill="none" stroke="#bbb" stroke-width="1.2"/><path d="M27.5 2 L30.5 5 L27.5 8" fill="none" stroke="#bbb" stroke-width="1.2"/></svg><div style="position:absolute;left:202.5px;top:938px;width:1px;height:17px;background:#b8b8b8;"></div><div class="t" style="left:214px;top:938.5px;font-size:11.8px;line-height:14px;color:#666;">Live Report</div><div style="position:absolute;left:290px;top:935px;width:130px;height:22px;background:#fff;border-bottom:2px solid #28794c;box-sizing:border-box;"></div><div class="t" style="left:290px;width:130px;text-align:center;top:938.5px;font-size:11.8px;line-height:14px;color:#217346;font-weight:bold;">Published Example</div><div class="t" style="left:431.5px;top:938.5px;font-size:11.8px;line-height:14px;color:#666;">Info</div><div style="position:absolute;left:466px;top:938px;width:1px;height:17px;background:#b8b8b8;"></div><svg style="position:absolute;left:1052px;top:942px" width="4" height="12"><circle cx="2" cy="2" r="0.8" fill="#aaa"/><circle cx="2" cy="6" r="0.8" fill="#aaa"/><circle cx="2" cy="10" r="0.8" fill="#aaa"/></svg><div style="position:absolute;left:1081px;top:941px;width:609px;height:14px;background:#dadada;"></div><div style="position:absolute;left:1067.5px;top:941.5px;width:13px;height:13px;background:#fff;border:1px solid #d8d8d8;box-sizing:border-box;"></div><svg style="position:absolute;left:1067.5px;top:941.5px" width="13" height="13"><path d="M8 3.5 L4.5 6.5 L8 9.5Z" fill="#555"/></svg><div style="position:absolute;left:1091px;top:941.5px;width:85px;height:13px;background:#fff;border:1px solid #d8d8d8;box-sizing:border-box;"></div><div style="position:absolute;left:1690px;top:941.5px;width:13px;height:13px;background:#fff;border:1px solid #d8d8d8;box-sizing:border-box;"></div><svg style="position:absolute;left:1690px;top:941.5px" width="13" height="13"><path d="M5 3.5 L8.5 6.5 L5 9.5Z" fill="#555"/></svg>
</div></div>
</body></html>
